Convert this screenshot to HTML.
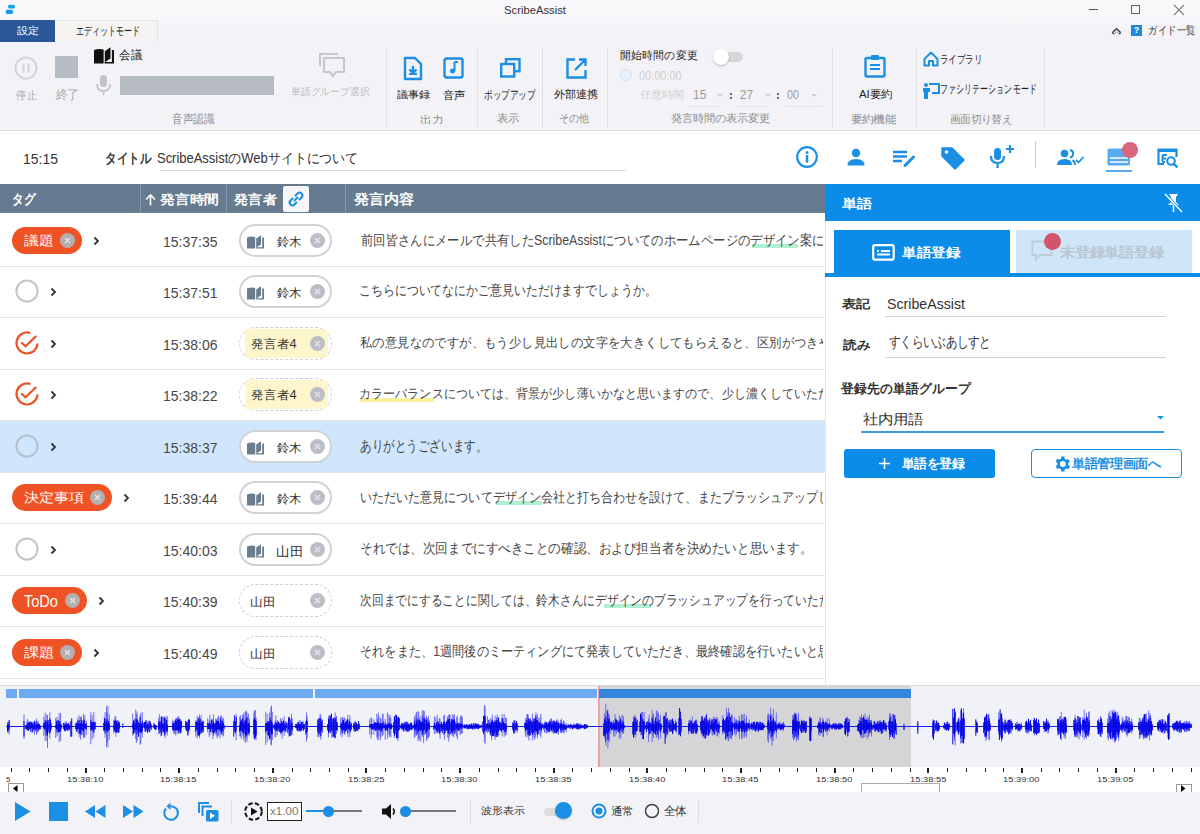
<!DOCTYPE html><html><head><meta charset="utf-8"><style>
*{box-sizing:border-box;margin:0;padding:0}
html,body{width:1200px;height:834px;overflow:hidden;background:#fff;font-family:"Liberation Sans",sans-serif;color:#333;position:relative}
.a{position:absolute;white-space:nowrap}
.t{position:absolute;white-space:nowrap;transform-origin:0 0}
svg{position:absolute;overflow:visible}
</style></head><body>
<div class="a" style="left:0px;top:0px;width:1200px;height:42px;background:linear-gradient(#f9f8fb 0px,#f9f8fb 14px,#f3f2f6 32px);"></div>
<svg style="left:5px;top:4px" width="11" height="11" viewBox="0 0 11 11"><rect x="3" y="0.8" width="7" height="3.6" rx="1.6" fill="#18a4ee"/><rect x="0.8" y="5.8" width="7.2" height="4.3" rx="1.6" fill="#1496e8"/><path d="M3.5 4.4L1.5 6M9 4.4L8 6" stroke="#7fd0f5" stroke-width="0.8"/></svg>
<div class="t" style="left:504.06px;top:3.33px;font-size:12px;line-height:16px;color:#333;font-weight:normal;transform:scale(0.9385,0.8889);--tw:61.97;--sy:0.8889;">ScribeAssist</div>
<div class="a" style="left:1089px;top:9px;width:9px;height:1px;background:#555;"></div>
<div class="a" style="left:1131px;top:5px;width:9px;height:9px;border:1px solid #666"></div>
<svg style="left:1174px;top:5px" width="10" height="10" viewBox="0 0 10 10"><path d="M0 0L10 10M10 0L0 10" stroke="#808080" stroke-width="1.1"/></svg>
<div class="a" style="left:0px;top:20px;width:55px;height:22px;background:#2b579a;"></div>
<div class="t" style="left:16.70px;top:24.33px;font-size:12px;line-height:16px;color:#fff;font-weight:normal;transform:scale(0.9261,0.8333);--tw:22.23;--sy:0.8333;">設定</div>
<div class="a" style="left:56px;top:20px;width:102px;height:22px;background:#f5f4f3;border-top:1px solid #e4e4e6;border-right:1px solid #e4e4e6"></div>
<div class="t" style="left:76.33px;top:23.00px;font-size:12px;line-height:16px;color:#222;font-weight:normal;transform:scale(0.6667,1.0000);--tw:64.00;--sy:1.0000;">エディットモード</div>
<svg style="left:1112px;top:27px" width="9" height="8" viewBox="0 0 9 8"><path d="M1.5 5.6L4.5 2.6L7.5 5.6" stroke="#505050" stroke-width="3.2" fill="none" stroke-linejoin="round" stroke-linecap="round"/><path d="M1.9 6.1L4.5 3.6L7.1 6.1" stroke="#f6f5f8" stroke-width="1.3" fill="none"/></svg>
<div class="a" style="left:1131px;top:25px;width:11px;height:11px;background:#1d8ae0;"></div>
<div class="a" style="left:1131px;top:25px;width:11px;height:11px;color:#fff;font-size:9px;line-height:11px;text-align:center;font-weight:bold">?</div>
<div class="t" style="left:1148.21px;top:23.15px;font-size:12px;line-height:16px;color:#333;font-weight:normal;transform:scale(0.7931,0.9500);--tw:47.59;--sy:0.9500;">ガイド一覧</div>
<div class="a" style="left:0px;top:42px;width:1200px;height:88px;background:#f3f2f6;"></div>
<div class="a" style="left:0px;top:130px;width:1200px;height:1px;background:#dedde2;"></div>
<svg style="left:14px;top:56px" width="24" height="24" viewBox="0 0 24 24"><circle cx="12" cy="12" r="10.5" fill="none" stroke="#d4d3d8" stroke-width="2"/><path d="M9.5 7.5v9M14.5 7.5v9" stroke="#d4d3d8" stroke-width="2"/></svg>
<div class="t" style="left:16.00px;top:87.59px;font-size:12px;line-height:16px;color:#a8a8ac;font-weight:normal;transform:scale(0.8750,0.9545);--tw:21.00;--sy:0.9545;">停止</div>
<div class="a" style="left:55px;top:56px;width:23px;height:22px;background:#b6bcc3;"></div>
<div class="t" style="left:56.00px;top:86.35px;font-size:12px;line-height:16px;color:#a8a8ac;font-weight:normal;transform:scale(0.9545,1.0500);--tw:22.91;--sy:1.0500;">終了</div>
<svg style="left:94px;top:47px" width="20" height="17" viewBox="0 0 17 14" preserveAspectRatio="none"><path d="M0 2.5Q4 1 8.2 2V13.5H0Z" fill="#111"/><path d="M9.2 12.5V3.5L14 0.3V9.5Z" fill="#111"/><path d="M15.2 2.5H17V13.5H9V12.3H15.2Z" fill="#111"/></svg>
<div class="t" style="left:119.02px;top:46.95px;font-size:12px;line-height:16px;color:#222;font-weight:normal;transform:scale(0.9783,1.0273);--tw:23.48;--sy:1.0273;">会議</div>
<svg style="left:96px;top:75px" width="15" height="21" viewBox="0 0 15 21"><rect x="4" y="0" width="7" height="12" rx="3.5" fill="#c4c4c8"/><path d="M1 9Q1 16 7.5 16Q14 16 14 9M7.5 16V20" stroke="#c4c4c8" stroke-width="1.8" fill="none"/></svg>
<div class="a" style="left:120px;top:76px;width:154px;height:18.5px;background:#b7bcc3;"></div>
<svg style="left:318px;top:52px" width="28" height="27" viewBox="0 0 28 27"><path d="M2 14V2H20" stroke="#c8c8cc" stroke-width="2.2" fill="none"/><path d="M6 6H26V20H18L15 24L12 20H6Z" stroke="#c8c8cc" stroke-width="2.2" fill="none" stroke-linejoin="round"/></svg>
<div class="t" style="left:291.18px;top:85.33px;font-size:12px;line-height:16px;color:#bbbbc0;font-weight:normal;transform:scale(0.8191,0.8333);--tw:78.64;--sy:0.8333;">単語グループ選択</div>
<div class="t" style="left:171.70px;top:111.00px;font-size:12px;line-height:16px;color:#8c8c8c;font-weight:normal;transform:scale(0.8813,1.0000);--tw:42.30;--sy:1.0000;">音声認識</div>
<div class="a" style="left:386px;top:48px;width:1px;height:80px;background:#e0dfe4;"></div>
<svg style="left:403px;top:56px" width="20" height="25" viewBox="0 0 20 25"><path d="M2 2H12L18 8V23H2Z" fill="none" stroke="#1a8fe3" stroke-width="2.4" stroke-linejoin="round"/><path d="M10 10V16M6.5 13.5L10 17L13.5 13.5" stroke="#1a8fe3" stroke-width="2.4" fill="none"/><rect x="6" y="17" width="8" height="2" fill="#1a8fe3"/></svg>
<svg style="left:443px;top:57px" width="21" height="22" viewBox="0 0 21 22"><rect x="1.5" y="1.5" width="18" height="19" rx="2" fill="none" stroke="#1a8fe3" stroke-width="2.4"/><path d="M11.5 5V14" stroke="#1a8fe3" stroke-width="2"/><path d="M11.5 5H15" stroke="#1a8fe3" stroke-width="2"/><circle cx="9.5" cy="14" r="2.5" fill="#1a8fe3"/></svg>
<div class="t" style="left:396.60px;top:88.33px;font-size:12px;line-height:16px;color:#222;font-weight:normal;transform:scale(0.9257,0.8333);--tw:33.33;--sy:0.8333;">議事録</div>
<div class="t" style="left:442.50px;top:88.18px;font-size:12px;line-height:16px;color:#222;font-weight:normal;transform:scale(0.9348,0.9091);--tw:22.43;--sy:0.9091;">音声</div>
<div class="t" style="left:419.81px;top:112.63px;font-size:12px;line-height:16px;color:#8c8c8c;font-weight:normal;transform:scale(0.9905,0.8364);--tw:23.77;--sy:0.8364;">出力</div>
<div class="a" style="left:477px;top:48px;width:1px;height:80px;background:#e0dfe4;"></div>
<svg style="left:500px;top:58px" width="21" height="20" viewBox="0 0 21 20"><rect x="6" y="1.2" width="13.5" height="12" fill="none" stroke="#1a8fe3" stroke-width="2.4"/><rect x="1.2" y="6" width="13" height="12.5" fill="#f3f2f6" stroke="#1a8fe3" stroke-width="2.4"/></svg>
<div class="t" style="left:483.98px;top:87.00px;font-size:12px;line-height:16px;color:#222;font-weight:normal;transform:scale(0.7186,1.0000);--tw:51.74;--sy:1.0000;">ポップアップ</div>
<div class="t" style="left:497.46px;top:111.27px;font-size:12px;line-height:16px;color:#8c8c8c;font-weight:normal;transform:scale(0.9391,0.9091);--tw:22.54;--sy:0.9091;">表示</div>
<div class="a" style="left:542px;top:48px;width:1px;height:80px;background:#e0dfe4;"></div>
<svg style="left:566px;top:58px" width="21" height="21" viewBox="0 0 21 21"><path d="M9 1.5H1.5V19.5H19.5V12" fill="none" stroke="#1a8fe3" stroke-width="2.4"/><path d="M13 1.5H19.5V8M19 2L9 12" fill="none" stroke="#1a8fe3" stroke-width="2.4"/></svg>
<div class="t" style="left:554.00px;top:87.17px;font-size:12px;line-height:16px;color:#222;font-weight:normal;transform:scale(0.9255,0.9167);--tw:44.43;--sy:0.9167;">外部連携</div>
<div class="t" style="left:559.17px;top:111.27px;font-size:12px;line-height:16px;color:#8c8c8c;font-weight:normal;transform:scale(0.8286,0.9091);--tw:29.83;--sy:0.9091;">その他</div>
<div class="a" style="left:607px;top:48px;width:1px;height:80px;background:#e0dfe4;"></div>
<div class="t" style="left:620.07px;top:47.88px;font-size:12px;line-height:16px;color:#222;font-weight:normal;transform:scale(0.9268,0.9375);--tw:77.85;--sy:0.9375;">開始時間の変更</div>
<div class="a" style="left:715px;top:52px;width:28px;height:10px;background:#d6d6da;border-radius:5px"></div>
<div class="a" style="left:713px;top:49px;width:16px;height:16px;border-radius:50%;background:#fff;box-shadow:0 1px 2px rgba(0,0,0,.25)"></div>
<div class="a" style="left:620px;top:69px;width:12px;height:12px;border-radius:50%;border:1.5px solid #cfe3f5;background:#e6f1fb"></div>
<div class="t" style="left:639.00px;top:67.07px;font-size:12px;line-height:16px;color:#cfcfd3;font-weight:normal;transform:scale(0.9130,1.0778);--tw:42.66;--sy:1.0778;">00:00:00</div>
<div class="t" style="left:640.00px;top:88.17px;font-size:12px;line-height:16px;color:#cfcfd3;font-weight:normal;transform:scale(0.9234,0.8167);--tw:44.32;--sy:0.8167;">任意時間</div>
<div class="t" style="left:693.00px;top:87.00px;font-size:12px;line-height:16px;color:#9a9a9e;font-weight:normal;transform:scale(1.0000,1.0000);--tw:13.36;--sy:1.0000;">15</div>
<div class="t" style="left:739.80px;top:87.00px;font-size:12px;line-height:16px;color:#9a9a9e;font-weight:normal;transform:scale(1.0000,1.0000);--tw:13.36;--sy:1.0000;">27</div>
<div class="t" style="left:787.40px;top:87.00px;font-size:12px;line-height:16px;color:#9a9a9e;font-weight:normal;transform:scale(0.8923,1.0000);--tw:11.92;--sy:1.0000;">00</div>
<div class="a" style="left:730px;top:93px;width:2px;height:2px;background:#666;"></div>
<div class="a" style="left:730px;top:97px;width:2px;height:2px;background:#666;"></div>
<div class="a" style="left:777px;top:93px;width:2px;height:2px;background:#666;"></div>
<div class="a" style="left:777px;top:97px;width:2px;height:2px;background:#666;"></div>
<svg style="left:717px;top:94px" width="6" height="4" viewBox="0 0 6 4"><path d="M0 0H6L3 3Z" fill="#d0d0d4"/></svg>
<svg style="left:765px;top:94px" width="6" height="4" viewBox="0 0 6 4"><path d="M0 0H6L3 3Z" fill="#d0d0d4"/></svg>
<svg style="left:811px;top:94px" width="6" height="4" viewBox="0 0 6 4"><path d="M0 0H6L3 3Z" fill="#d0d0d4"/></svg>
<div class="a" style="left:688px;top:106px;width:32px;height:1px;background:#e2e2e6;"></div>
<div class="a" style="left:736px;top:106px;width:32px;height:1px;background:#e2e2e6;"></div>
<div class="a" style="left:785px;top:106px;width:37px;height:1px;background:#e2e2e6;"></div>
<div class="t" style="left:670.58px;top:110.80px;font-size:12px;line-height:16px;color:#8c8c8c;font-weight:normal;transform:scale(0.9198,0.9000);--tw:99.34;--sy:0.9000;">発言時間の表示変更</div>
<div class="a" style="left:832px;top:48px;width:1px;height:80px;background:#e0dfe4;"></div>
<svg style="left:864px;top:54px" width="22" height="24" viewBox="0 0 22 24"><rect x="1.5" y="4" width="19" height="18.5" rx="1.5" fill="none" stroke="#1a8fe3" stroke-width="2.4"/><rect x="7" y="1" width="8" height="5" rx="1" fill="#1a8fe3"/><path d="M6 11H16M6 15H16" stroke="#1a8fe3" stroke-width="2"/></svg>
<div class="t" style="left:858.70px;top:86.67px;font-size:12px;line-height:16px;color:#222;font-weight:normal;transform:scale(0.9500,0.9091);--tw:33.58;--sy:0.9091;">AI要約</div>
<div class="t" style="left:851.06px;top:112.05px;font-size:12px;line-height:16px;color:#8c8c8c;font-weight:normal;transform:scale(0.9362,0.8750);--tw:44.94;--sy:0.8750;">要約機能</div>
<div class="a" style="left:916px;top:48px;width:1px;height:80px;background:#e0dfe4;"></div>
<svg style="left:923px;top:51px" width="16" height="16" viewBox="0 0 16 16"><path d="M1.5 8L8 1.5L14.5 8V14.5H10V10H6V14.5H1.5Z" fill="none" stroke="#1a8fe3" stroke-width="2" stroke-linejoin="round"/></svg>
<div class="t" style="left:939.60px;top:51.63px;font-size:12px;line-height:16px;color:#222;font-weight:normal;transform:scale(0.6982,0.8833);--tw:41.89;--sy:0.8833;">ライブラリ</div>
<svg style="left:923px;top:82px" width="17" height="17" viewBox="0 0 17 17"><path d="M6 2H16V11H9" fill="none" stroke="#1a8fe3" stroke-width="2"/><circle cx="3" cy="3" r="2" fill="#1a8fe3"/><path d="M0 6H7V10H5V17H1V10H0Z" fill="#1a8fe3"/></svg>
<div class="t" style="left:940.03px;top:81.35px;font-size:12px;line-height:16px;color:#222;font-weight:normal;transform:scale(0.6716,1.0182);--tw:96.71;--sy:1.0182;">ファシリテーションモード</div>
<div class="t" style="left:949.84px;top:112.05px;font-size:12px;line-height:16px;color:#8c8c8c;font-weight:normal;transform:scale(0.8614,0.8750);--tw:62.02;--sy:0.8750;">画面切り替え</div>
<div class="a" style="left:1044px;top:48px;width:1px;height:80px;background:#e0dfe4;"></div>
<div class="t" style="left:22.60px;top:148.60px;font-size:14px;line-height:18px;color:#333;font-weight:normal;transform:scale(1.0000,1.1000);--tw:35.05;--sy:1.1000;">15:15</div>
<div class="t" style="left:105.36px;top:149.00px;font-size:14px;line-height:18px;color:#3a3a3a;font-weight:bold;transform:scale(0.8222,1.0000);--tw:46.04;--sy:1.0000;">タイトル</div>
<div class="t" style="left:157.07px;top:149.00px;font-size:14px;line-height:18px;color:#333;font-weight:normal;transform:scale(0.9256,1.0000);--tw:201.37;--sy:1.0000;">ScribeAssistのWebサイトについて</div>
<div class="a" style="left:160px;top:170px;width:466px;height:1px;background:#d9d9dd;"></div>
<svg style="left:796px;top:146px" width="22" height="22" viewBox="0 0 22 22"><circle cx="11" cy="11" r="9.8" fill="none" stroke="#1a8fe3" stroke-width="2.2"/><circle cx="11" cy="6.5" r="1.5" fill="#1a8fe3"/><rect x="9.8" y="9" width="2.4" height="7.5" fill="#1a8fe3"/></svg>
<svg style="left:847px;top:148px" width="18" height="18" viewBox="0 0 18 18"><circle cx="9" cy="5" r="4.2" fill="#1a8fe3"/><path d="M0.5 17.5Q0.5 11 9 11Q17.5 11 17.5 17.5Z" fill="#1a8fe3"/></svg>
<svg style="left:893px;top:150px" width="23" height="17" viewBox="0 0 23 17"><path d="M0 2H14M0 6.5H14M0 11H9" stroke="#1a8fe3" stroke-width="2.4"/><path d="M12 15.5L20.5 7" stroke="#1a8fe3" stroke-width="3" stroke-linecap="round"/></svg>
<svg style="left:941px;top:147px" width="24" height="22" viewBox="0 0 24 22"><path d="M1 1H11L23 13L14 22L1 9Z" fill="#1a8fe3" stroke="#1a8fe3" stroke-width="1.5" stroke-linejoin="round"/><circle cx="5.5" cy="5" r="1.8" fill="#fff"/></svg>
<svg style="left:989px;top:145px" width="26" height="24" viewBox="0 0 26 24"><rect x="5" y="3" width="7" height="12" rx="3.5" fill="#1a8fe3"/><path d="M2 11Q2 18 8.5 18Q15 18 15 11M8.5 18V23" stroke="#1a8fe3" stroke-width="2.2" fill="none"/><path d="M21 0V8M17 4H25" stroke="#1a8fe3" stroke-width="2.2"/></svg>
<div class="a" style="left:1035px;top:141px;width:1px;height:27px;background:#cfc8cc;"></div>
<svg style="left:1057px;top:149px" width="27" height="17" viewBox="0 0 27 17"><circle cx="7.5" cy="4.5" r="3.8" fill="#1a8fe3"/><path d="M0 16Q0 10 7.5 10Q15 10 15 16Z" fill="#1a8fe3"/><path d="M13 1A3.8 3.8 0 0 1 13 8.5M15.5 11Q18 12.5 18 16" stroke="#1a8fe3" stroke-width="2" fill="none"/><path d="M19 11L21.5 13.5L26.5 8" stroke="#1a8fe3" stroke-width="1.8" fill="none"/></svg>
<svg style="left:1106px;top:148px" width="27" height="24" viewBox="0 0 27 24"><rect x="1.5" y="0.5" width="22.5" height="17" rx="1.5" fill="#5aaaf0"/><path d="M4 10H22M4 14H22" stroke="#fff" stroke-width="1.6"/><rect x="0" y="22" width="26" height="2" fill="#5aaaf0"/></svg>
<div class="a" style="left:1122px;top:142px;width:16px;height:16px;border-radius:50%;background:#d8677c"></div>
<svg style="left:1157px;top:148px" width="23" height="22" viewBox="0 0 23 22"><path d="M7 16H1.5V1.5H19.5V9" fill="none" stroke="#1a8fe3" stroke-width="2.2"/><rect x="1" y="1" width="19" height="3" fill="#1a8fe3"/><path d="M5.5 7H10M5.5 10.5H9M5.5 14H8M5.5 7V14" stroke="#1a8fe3" stroke-width="2" fill="none"/><circle cx="14" cy="13" r="3.8" fill="#fff" stroke="#1a8fe3" stroke-width="2"/><path d="M16.8 15.8L20.5 19.5" stroke="#1a8fe3" stroke-width="2.4"/></svg>
<div class="a" style="left:0px;top:184px;width:825px;height:29px;background:#667b8f;"></div>
<div class="t" style="left:11.94px;top:190.00px;font-size:14px;line-height:18px;color:#fff;font-weight:bold;transform:scale(0.8296,1.0000);--tw:23.23;--sy:1.0000;">タグ</div>
<div class="a" style="left:140px;top:184px;width:1px;height:29px;background:#859aab;"></div>
<svg style="left:145px;top:194px" width="11" height="12" viewBox="0 0 11 12"><path d="M5.5 11.5V1M1 5.5L5.5 1L10 5.5" stroke="#fff" stroke-width="1.6" fill="none"/></svg>
<div class="t" style="left:160.00px;top:191.14px;font-size:14px;line-height:18px;color:#fff;font-weight:bold;transform:scale(1.0545,0.9286);--tw:59.05;--sy:0.9286;">発言時間</div>
<div class="a" style="left:226px;top:184px;width:1px;height:29px;background:#859aab;"></div>
<div class="t" style="left:234.00px;top:190.80px;font-size:14px;line-height:18px;color:#fff;font-weight:bold;transform:scale(1.0310,0.9500);--tw:43.30;--sy:0.9500;">発言者</div>
<div class="a" style="left:283px;top:186px;width:26px;height:26px;background:#f6f5f8;border-radius:2px"></div>
<svg style="left:288px;top:191px" width="16" height="16" viewBox="0 0 16 16"><path d="M6.5 9.5L9.5 6.5" stroke="#1a8fe3" stroke-width="2" stroke-linecap="round"/><path d="M7.5 4.5L9.5 2.5A2.8 2.8 0 0 1 13.5 6.5L11.5 8.5M8.5 11.5L6.5 13.5A2.8 2.8 0 0 1 2.5 9.5L4.5 7.5" stroke="#1a8fe3" stroke-width="2" fill="none" stroke-linecap="round"/></svg>
<div class="a" style="left:345px;top:184px;width:1px;height:29px;background:#859aab;"></div>
<div class="t" style="left:353.75px;top:190.03px;font-size:14px;line-height:18px;color:#fff;font-weight:bold;transform:scale(1.0634,0.9857);--tw:59.55;--sy:0.9857;">発言内容</div>
<div class="a" style="left:12px;top:227.0px;width:70px;height:27.0px;background:#ef5224;border-radius:14px"></div>
<div class="t" style="left:23.80px;top:231.73px;font-size:14px;line-height:18px;color:#fff;font-weight:normal;transform:scale(1.0593,0.9231);--tw:29.66;--sy:0.9231;">議題</div>
<div class="a" style="left:60px;top:233.0px;width:15px;height:15px;border-radius:50%;background:#b3aeb0"></div>
<svg style="left:60px;top:233.0px" width="15" height="15" viewBox="0 0 15 15"><path d="M5 5L10 10M10 5L5 10" stroke="#e8e4e6" stroke-width="1.4"/></svg>
<svg style="left:93px;top:235.5px" width="7" height="10" viewBox="0 0 7 10"><path d="M1.5 1.5L5 5L1.5 8.5" stroke="#333" stroke-width="1.8" fill="none"/></svg>
<div class="t" style="left:163.00px;top:231.60px;font-size:14px;line-height:18px;color:#474747;font-weight:normal;transform:scale(1.0000,1.1000);--tw:54.50;--sy:1.1000;">15:37:35</div>
<div class="a" style="left:239px;top:224.0px;width:93px;height:33px;border-radius:17px;border:2.5px solid #d2d2d6;background:#fff;box-sizing:border-box"></div>
<svg style="left:247px;top:234.5px" width="17" height="14" viewBox="0 0 17 14"><path d="M0 2.5Q4 1 8.2 2V13.5H0Z" fill="#6a7d8e"/><path d="M9.2 12.5V3.5L14 0.3V9.5Z" fill="#6a7d8e"/><path d="M15.2 2.5H17V13.5H9V12.3H15.2Z" fill="#6a7d8e"/></svg>
<div class="t" style="left:277.30px;top:233.65px;font-size:13px;line-height:17px;color:#333;font-weight:normal;transform:scale(0.9600,0.9231);--tw:24.96;--sy:0.9231;">鈴木</div>
<div class="a" style="left:309.5px;top:233.0px;width:15px;height:15px;border-radius:50%;background:#bcbec6"></div>
<svg style="left:309.5px;top:233.0px" width="15" height="15" viewBox="0 0 15 15"><path d="M5 5L10 10M10 5L5 10" stroke="#e4e5ea" stroke-width="1.4"/></svg>
<div class="a" style="left:752px;top:244.0px;width:46px;height:4.0px;background:#aef0d0;"></div>
<div class="a" style="left:0;top:0;width:823px;height:834px;overflow:hidden">
<div class="t" style="left:360.50px;top:231.00px;font-size:14px;line-height:18px;color:#474747;font-weight:normal;transform:scale(0.8826,1.0000);--tw:463.41;--sy:1.0000;">前回皆さんにメールで共有したScribeAssistについてのホームページのデザイン案に</div>
</div>
<svg style="left:14.5px;top:279.0px" width="24" height="24" viewBox="0 0 24 24"><circle cx="12" cy="12" r="10.6" fill="none" stroke="#c4c4c6" stroke-width="2"/></svg>
<svg style="left:50px;top:286.5px" width="7" height="10" viewBox="0 0 7 10"><path d="M1.5 1.5L5 5L1.5 8.5" stroke="#333" stroke-width="1.8" fill="none"/></svg>
<div class="t" style="left:163.00px;top:282.60px;font-size:14px;line-height:18px;color:#474747;font-weight:normal;transform:scale(1.0000,1.1000);--tw:54.50;--sy:1.1000;">15:37:51</div>
<div class="a" style="left:239px;top:275.0px;width:93px;height:33px;border-radius:17px;border:2.5px solid #d2d2d6;background:#fff;box-sizing:border-box"></div>
<svg style="left:247px;top:285.5px" width="17" height="14" viewBox="0 0 17 14"><path d="M0 2.5Q4 1 8.2 2V13.5H0Z" fill="#6a7d8e"/><path d="M9.2 12.5V3.5L14 0.3V9.5Z" fill="#6a7d8e"/><path d="M15.2 2.5H17V13.5H9V12.3H15.2Z" fill="#6a7d8e"/></svg>
<div class="t" style="left:277.30px;top:284.65px;font-size:13px;line-height:17px;color:#333;font-weight:normal;transform:scale(0.9600,0.9231);--tw:24.96;--sy:0.9231;">鈴木</div>
<div class="a" style="left:309.5px;top:284.0px;width:15px;height:15px;border-radius:50%;background:#bcbec6"></div>
<svg style="left:309.5px;top:284.0px" width="15" height="15" viewBox="0 0 15 15"><path d="M5 5L10 10M10 5L5 10" stroke="#e4e5ea" stroke-width="1.4"/></svg>
<div class="a" style="left:0;top:0;width:823px;height:834px;overflow:hidden">
<div class="t" style="left:358.80px;top:281.00px;font-size:14px;line-height:18px;color:#474747;font-weight:normal;transform:scale(0.8506,1.0000);--tw:297.71;--sy:1.0000;">こちらについてなにかご意見いただけますでしょうか。</div>
</div>
<svg style="left:14.5px;top:331.0px" width="24" height="24" viewBox="0 0 24 24"><path d="M15.3 2A10.5 10.5 0 1 0 22.5 12.5" fill="none" stroke="#ea5227" stroke-width="2.2"/><path d="M6.2 11.3L10.5 15.2L21.2 5" stroke="#ea5227" stroke-width="2.2" fill="none"/></svg>
<svg style="left:50px;top:338.5px" width="7" height="10" viewBox="0 0 7 10"><path d="M1.5 1.5L5 5L1.5 8.5" stroke="#333" stroke-width="1.8" fill="none"/></svg>
<div class="t" style="left:163.00px;top:334.60px;font-size:14px;line-height:18px;color:#474747;font-weight:normal;transform:scale(1.0000,1.1000);--tw:54.50;--sy:1.1000;">15:38:06</div>
<div class="a" style="left:239px;top:327.0px;width:93px;height:33px;border-radius:17px;border:1.6px dashed #cfcfd4;background:#fff;box-sizing:border-box"></div>
<div class="a" style="left:245px;top:329.0px;width:83px;height:29.0px;background:#fdf6cc;border-radius:4px"></div>
<div class="t" style="left:250.70px;top:335.81px;font-size:13px;line-height:17px;color:#333;font-weight:normal;transform:scale(0.9891,0.9462);--tw:45.73;--sy:0.9462;">発言者4</div>
<div class="a" style="left:309.5px;top:336.0px;width:15px;height:15px;border-radius:50%;background:#bcbec6"></div>
<svg style="left:309.5px;top:336.0px" width="15" height="15" viewBox="0 0 15 15"><path d="M5 5L10 10M10 5L5 10" stroke="#e4e5ea" stroke-width="1.4"/></svg>
<div class="a" style="left:0;top:0;width:823px;height:834px;overflow:hidden">
<div class="t" style="left:359.61px;top:334.13px;font-size:14px;line-height:18px;color:#474747;font-weight:normal;transform:scale(0.8858,0.9333);--tw:471.27;--sy:0.9333;">私の意見なのですが、もう少し見出しの文字を大きくしてもらえると、区別がつきや</div>
</div>
<svg style="left:14.5px;top:382.0px" width="24" height="24" viewBox="0 0 24 24"><path d="M15.3 2A10.5 10.5 0 1 0 22.5 12.5" fill="none" stroke="#ea5227" stroke-width="2.2"/><path d="M6.2 11.3L10.5 15.2L21.2 5" stroke="#ea5227" stroke-width="2.2" fill="none"/></svg>
<svg style="left:50px;top:389.5px" width="7" height="10" viewBox="0 0 7 10"><path d="M1.5 1.5L5 5L1.5 8.5" stroke="#333" stroke-width="1.8" fill="none"/></svg>
<div class="t" style="left:163.00px;top:385.60px;font-size:14px;line-height:18px;color:#474747;font-weight:normal;transform:scale(1.0000,1.1000);--tw:54.50;--sy:1.1000;">15:38:22</div>
<div class="a" style="left:239px;top:378.0px;width:93px;height:33px;border-radius:17px;border:1.6px dashed #cfcfd4;background:#fff;box-sizing:border-box"></div>
<div class="a" style="left:245px;top:380.0px;width:83px;height:29.0px;background:#fdf6cc;border-radius:4px"></div>
<div class="t" style="left:250.70px;top:386.81px;font-size:13px;line-height:17px;color:#333;font-weight:normal;transform:scale(0.9891,0.9462);--tw:45.73;--sy:0.9462;">発言者4</div>
<div class="a" style="left:309.5px;top:387.0px;width:15px;height:15px;border-radius:50%;background:#bcbec6"></div>
<svg style="left:309.5px;top:387.0px" width="15" height="15" viewBox="0 0 15 15"><path d="M5 5L10 10M10 5L5 10" stroke="#e4e5ea" stroke-width="1.4"/></svg>
<div class="a" style="left:360px;top:398.0px;width:74px;height:4.0px;background:#f9f1a0;"></div>
<div class="a" style="left:0;top:0;width:823px;height:834px;overflow:hidden">
<div class="t" style="left:358.77px;top:385.13px;font-size:14px;line-height:18px;color:#474747;font-weight:normal;transform:scale(0.8631,0.9333);--tw:471.23;--sy:0.9333;">カラーバランスについては、背景が少し薄いかなと思いますので、少し濃くしていただ</div>
</div>
<div class="a" style="left:0px;top:421px;width:825px;height:51px;background:#d0e6fd;"></div>
<svg style="left:14.5px;top:434.0px" width="24" height="24" viewBox="0 0 24 24"><circle cx="12" cy="12" r="10.6" fill="none" stroke="#b5c0cb" stroke-width="2"/></svg>
<svg style="left:50px;top:441.5px" width="7" height="10" viewBox="0 0 7 10"><path d="M1.5 1.5L5 5L1.5 8.5" stroke="#333" stroke-width="1.8" fill="none"/></svg>
<div class="t" style="left:163.00px;top:437.60px;font-size:14px;line-height:18px;color:#474747;font-weight:normal;transform:scale(1.0000,1.1000);--tw:54.50;--sy:1.1000;">15:38:37</div>
<div class="a" style="left:239px;top:430.0px;width:93px;height:33px;border-radius:17px;border:2.5px solid #d2d2d6;background:#fff;box-sizing:border-box"></div>
<svg style="left:247px;top:440.5px" width="17" height="14" viewBox="0 0 17 14"><path d="M0 2.5Q4 1 8.2 2V13.5H0Z" fill="#6a7d8e"/><path d="M9.2 12.5V3.5L14 0.3V9.5Z" fill="#6a7d8e"/><path d="M15.2 2.5H17V13.5H9V12.3H15.2Z" fill="#6a7d8e"/></svg>
<div class="t" style="left:277.30px;top:439.65px;font-size:13px;line-height:17px;color:#333;font-weight:normal;transform:scale(0.9600,0.9231);--tw:24.96;--sy:0.9231;">鈴木</div>
<div class="a" style="left:309.5px;top:439.0px;width:15px;height:15px;border-radius:50%;background:#bcbec6"></div>
<svg style="left:309.5px;top:439.0px" width="15" height="15" viewBox="0 0 15 15"><path d="M5 5L10 10M10 5L5 10" stroke="#e4e5ea" stroke-width="1.4"/></svg>
<div class="a" style="left:0;top:0;width:823px;height:834px;overflow:hidden">
<div class="t" style="left:359.67px;top:435.77px;font-size:14px;line-height:18px;color:#474747;font-weight:normal;transform:scale(0.8269,1.0769);--tw:127.35;--sy:1.0769;">ありがとうございます。</div>
</div>
<div class="a" style="left:12px;top:484.0px;width:100px;height:27.0px;background:#ef5224;border-radius:14px"></div>
<div class="t" style="left:23.80px;top:488.73px;font-size:14px;line-height:18px;color:#fff;font-weight:normal;transform:scale(1.0764,0.9231);--tw:60.28;--sy:0.9231;">決定事項</div>
<div class="a" style="left:90px;top:490.0px;width:15px;height:15px;border-radius:50%;background:#b3aeb0"></div>
<svg style="left:90px;top:490.0px" width="15" height="15" viewBox="0 0 15 15"><path d="M5 5L10 10M10 5L5 10" stroke="#e8e4e6" stroke-width="1.4"/></svg>
<svg style="left:123px;top:492.5px" width="7" height="10" viewBox="0 0 7 10"><path d="M1.5 1.5L5 5L1.5 8.5" stroke="#333" stroke-width="1.8" fill="none"/></svg>
<div class="t" style="left:163.00px;top:488.60px;font-size:14px;line-height:18px;color:#474747;font-weight:normal;transform:scale(1.0000,1.1000);--tw:54.50;--sy:1.1000;">15:39:44</div>
<div class="a" style="left:239px;top:481.0px;width:93px;height:33px;border-radius:17px;border:2.5px solid #d2d2d6;background:#fff;box-sizing:border-box"></div>
<svg style="left:247px;top:491.5px" width="17" height="14" viewBox="0 0 17 14"><path d="M0 2.5Q4 1 8.2 2V13.5H0Z" fill="#6a7d8e"/><path d="M9.2 12.5V3.5L14 0.3V9.5Z" fill="#6a7d8e"/><path d="M15.2 2.5H17V13.5H9V12.3H15.2Z" fill="#6a7d8e"/></svg>
<div class="t" style="left:277.30px;top:490.65px;font-size:13px;line-height:17px;color:#333;font-weight:normal;transform:scale(0.9600,0.9231);--tw:24.96;--sy:0.9231;">鈴木</div>
<div class="a" style="left:309.5px;top:490.0px;width:15px;height:15px;border-radius:50%;background:#bcbec6"></div>
<svg style="left:309.5px;top:490.0px" width="15" height="15" viewBox="0 0 15 15"><path d="M5 5L10 10M10 5L5 10" stroke="#e4e5ea" stroke-width="1.4"/></svg>
<div class="a" style="left:496px;top:501.0px;width:46px;height:4.0px;background:#aef0d0;"></div>
<div class="a" style="left:0;top:0;width:823px;height:834px;overflow:hidden">
<div class="t" style="left:359.64px;top:488.00px;font-size:14px;line-height:18px;color:#474747;font-weight:normal;transform:scale(0.8610,1.0000);--tw:470.08;--sy:1.0000;">いただいた意見についてデザイン会社と打ち合わせを設けて、またブラッシュアップし</div>
</div>
<svg style="left:14.5px;top:537.0px" width="24" height="24" viewBox="0 0 24 24"><circle cx="12" cy="12" r="10.6" fill="none" stroke="#c4c4c6" stroke-width="2"/></svg>
<svg style="left:50px;top:544.5px" width="7" height="10" viewBox="0 0 7 10"><path d="M1.5 1.5L5 5L1.5 8.5" stroke="#333" stroke-width="1.8" fill="none"/></svg>
<div class="t" style="left:163.00px;top:540.60px;font-size:14px;line-height:18px;color:#474747;font-weight:normal;transform:scale(1.0000,1.1000);--tw:54.50;--sy:1.1000;">15:40:03</div>
<div class="a" style="left:239px;top:533.0px;width:93px;height:33px;border-radius:17px;border:2.5px solid #d2d2d6;background:#fff;box-sizing:border-box"></div>
<svg style="left:247px;top:543.5px" width="17" height="14" viewBox="0 0 17 14"><path d="M0 2.5Q4 1 8.2 2V13.5H0Z" fill="#6a7d8e"/><path d="M9.2 12.5V3.5L14 0.3V9.5Z" fill="#6a7d8e"/><path d="M15.2 2.5H17V13.5H9V12.3H15.2Z" fill="#6a7d8e"/></svg>
<div class="t" style="left:276.26px;top:542.50px;font-size:13px;line-height:17px;color:#333;font-weight:normal;transform:scale(1.0435,1.0000);--tw:27.13;--sy:1.0000;">山田</div>
<div class="a" style="left:309.5px;top:542.0px;width:15px;height:15px;border-radius:50%;background:#bcbec6"></div>
<svg style="left:309.5px;top:542.0px" width="15" height="15" viewBox="0 0 15 15"><path d="M5 5L10 10M10 5L5 10" stroke="#e4e5ea" stroke-width="1.4"/></svg>
<div class="a" style="left:0;top:0;width:823px;height:834px;overflow:hidden">
<div class="t" style="left:359.60px;top:539.00px;font-size:14px;line-height:18px;color:#474747;font-weight:normal;transform:scale(0.8976,1.0000);--tw:452.37;--sy:1.0000;">それでは、次回までにすべきことの確認、および担当者を決めたいと思います。</div>
</div>
<div class="a" style="left:12px;top:587.0px;width:75px;height:27.0px;background:#ef5224;border-radius:14px"></div>
<div class="t" style="left:23.80px;top:589.70px;font-size:14px;line-height:18px;color:#fff;font-weight:normal;transform:scale(1.0375,1.2000);--tw:33.91;--sy:1.2000;">ToDo</div>
<div class="a" style="left:65px;top:593.0px;width:15px;height:15px;border-radius:50%;background:#b3aeb0"></div>
<svg style="left:65px;top:593.0px" width="15" height="15" viewBox="0 0 15 15"><path d="M5 5L10 10M10 5L5 10" stroke="#e8e4e6" stroke-width="1.4"/></svg>
<svg style="left:98px;top:595.5px" width="7" height="10" viewBox="0 0 7 10"><path d="M1.5 1.5L5 5L1.5 8.5" stroke="#333" stroke-width="1.8" fill="none"/></svg>
<div class="t" style="left:163.00px;top:591.60px;font-size:14px;line-height:18px;color:#474747;font-weight:normal;transform:scale(1.0000,1.1000);--tw:54.50;--sy:1.1000;">15:40:39</div>
<div class="a" style="left:239px;top:584.0px;width:93px;height:33px;border-radius:17px;border:1.6px dashed #cfcfd4;background:#fff;box-sizing:border-box"></div>
<div class="t" style="left:250.19px;top:593.80px;font-size:13px;line-height:17px;color:#333;font-weight:normal;transform:scale(1.0087,0.9500);--tw:26.23;--sy:0.9500;">山田</div>
<div class="a" style="left:309.5px;top:593.0px;width:15px;height:15px;border-radius:50%;background:#bcbec6"></div>
<svg style="left:309.5px;top:593.0px" width="15" height="15" viewBox="0 0 15 15"><path d="M5 5L10 10M10 5L5 10" stroke="#e4e5ea" stroke-width="1.4"/></svg>
<div class="a" style="left:604px;top:604.0px;width:47px;height:4.0px;background:#aef0d0;"></div>
<div class="a" style="left:0;top:0;width:823px;height:834px;overflow:hidden">
<div class="t" style="left:359.66px;top:591.00px;font-size:14px;line-height:18px;color:#474747;font-weight:normal;transform:scale(0.8399,1.0000);--tw:470.34;--sy:1.0000;">次回までにすることに関しては、鈴木さんにデザインのブラッシュアップを行っていただ</div>
</div>
<div class="a" style="left:12px;top:639.0px;width:70px;height:27.0px;background:#ef5224;border-radius:14px"></div>
<div class="t" style="left:23.80px;top:643.73px;font-size:14px;line-height:18px;color:#fff;font-weight:normal;transform:scale(1.1037,0.9231);--tw:30.90;--sy:0.9231;">課題</div>
<div class="a" style="left:60px;top:645.0px;width:15px;height:15px;border-radius:50%;background:#b3aeb0"></div>
<svg style="left:60px;top:645.0px" width="15" height="15" viewBox="0 0 15 15"><path d="M5 5L10 10M10 5L5 10" stroke="#e8e4e6" stroke-width="1.4"/></svg>
<svg style="left:93px;top:647.5px" width="7" height="10" viewBox="0 0 7 10"><path d="M1.5 1.5L5 5L1.5 8.5" stroke="#333" stroke-width="1.8" fill="none"/></svg>
<div class="t" style="left:163.00px;top:643.60px;font-size:14px;line-height:18px;color:#474747;font-weight:normal;transform:scale(1.0000,1.1000);--tw:54.50;--sy:1.1000;">15:40:49</div>
<div class="a" style="left:239px;top:636.0px;width:93px;height:33px;border-radius:17px;border:1.6px dashed #cfcfd4;background:#fff;box-sizing:border-box"></div>
<div class="t" style="left:250.19px;top:645.80px;font-size:13px;line-height:17px;color:#333;font-weight:normal;transform:scale(1.0087,0.9500);--tw:26.23;--sy:0.9500;">山田</div>
<div class="a" style="left:309.5px;top:645.0px;width:15px;height:15px;border-radius:50%;background:#bcbec6"></div>
<svg style="left:309.5px;top:645.0px" width="15" height="15" viewBox="0 0 15 15"><path d="M5 5L10 10M10 5L5 10" stroke="#e4e5ea" stroke-width="1.4"/></svg>
<div class="a" style="left:0;top:0;width:823px;height:834px;overflow:hidden">
<div class="t" style="left:359.63px;top:642.00px;font-size:14px;line-height:18px;color:#474747;font-weight:normal;transform:scale(0.8711,1.0000);--tw:470.19;--sy:1.0000;">それをまた、1週間後のミーティングにて発表していただき、最終確認を行いたいと思</div>
</div>
<div class="a" style="left:0px;top:266px;width:825px;height:1px;background:#e4e4e8;"></div>
<div class="a" style="left:0px;top:317px;width:825px;height:1px;background:#e4e4e8;"></div>
<div class="a" style="left:0px;top:369px;width:825px;height:1px;background:#e4e4e8;"></div>
<div class="a" style="left:0px;top:420px;width:825px;height:1px;background:#e4e4e8;"></div>
<div class="a" style="left:0px;top:472px;width:825px;height:1px;background:#e4e4e8;"></div>
<div class="a" style="left:0px;top:523px;width:825px;height:1px;background:#e4e4e8;"></div>
<div class="a" style="left:0px;top:575px;width:825px;height:1px;background:#e4e4e8;"></div>
<div class="a" style="left:0px;top:626px;width:825px;height:1px;background:#e4e4e8;"></div>
<div class="a" style="left:0px;top:678px;width:825px;height:1px;background:#e4e4e8;"></div>
<div class="a" style="left:825px;top:184px;width:375px;height:501px;background:#fff;"></div>
<div class="a" style="left:825px;top:184px;width:1px;height:501px;background:#e6e6ea;"></div>
<div class="a" style="left:825px;top:184px;width:375px;height:37px;background:#0a8ce8;"></div>
<div class="t" style="left:842.30px;top:194.71px;font-size:14px;line-height:18px;color:#fff;font-weight:bold;transform:scale(1.0464,0.8929);--tw:29.30;--sy:0.8929;">単語</div>
<svg style="left:1164px;top:193px" width="19" height="20" viewBox="0 0 19 20"><path d="M5 1H14L12 4V9L15 12H4L7 9V4Z" fill="#fff"/><path d="M9.5 12V19" stroke="#fff" stroke-width="1.6"/><path d="M1 1L18 19" stroke="#0a8ce8" stroke-width="3"/><path d="M1 1L18 19" stroke="#fff" stroke-width="1.5"/></svg>
<div class="a" style="left:834px;top:230px;width:176px;height:43px;background:#0a8ce8;"></div>
<svg style="left:872px;top:244px" width="23" height="17" viewBox="0 0 23 17"><rect x="1.2" y="1.2" width="20.5" height="14.5" rx="2" fill="none" stroke="#fff" stroke-width="2.2"/><path d="M5 7H7M9 7H18M5 10.5H18" stroke="#fff" stroke-width="1.8"/></svg>
<div class="t" style="left:901.60px;top:244.14px;font-size:14px;line-height:18px;color:#fff;font-weight:bold;transform:scale(1.0429,0.9286);--tw:58.40;--sy:0.9286;">単語登録</div>
<div class="a" style="left:1016px;top:230px;width:176px;height:43px;background:#cfe5f8;"></div>
<svg style="left:1031px;top:240px" width="22" height="21" viewBox="0 0 22 21"><path d="M1.5 1.5H20.5V15H9L5 19.5V15H1.5Z" fill="none" stroke="#c2cad2" stroke-width="1.8"/></svg>
<div class="t" style="left:1059.80px;top:242.74px;font-size:14px;line-height:18px;color:#b9c5d1;font-weight:bold;transform:scale(1.0582,0.9786);--tw:103.70;--sy:0.9786;">未登録単語登録</div>
<div class="a" style="left:1044px;top:233px;width:17px;height:17px;border-radius:50%;background:#d2536b"></div>
<div class="a" style="left:825px;top:273px;width:375px;height:4px;background:#0a8ce8;"></div>
<div class="t" style="left:842.00px;top:295.76px;font-size:14px;line-height:18px;color:#333;font-weight:bold;transform:scale(1.0286,0.8714);--tw:28.80;--sy:0.8714;">表記</div>
<div class="t" style="left:886.99px;top:295.33px;font-size:14px;line-height:18px;color:#333;font-weight:normal;transform:scale(1.0132,0.9909);--tw:78.04;--sy:0.9909;">ScribeAssist</div>
<div class="a" style="left:885px;top:316px;width:281px;height:1px;background:#d4d4d8;"></div>
<div class="t" style="left:843.00px;top:336.63px;font-size:14px;line-height:18px;color:#333;font-weight:bold;transform:scale(0.9643,0.8357);--tw:27.00;--sy:0.8357;">読み</div>
<div class="t" style="left:889.00px;top:331.63px;font-size:14px;line-height:18px;color:#333;font-weight:normal;transform:scale(0.8073,1.0417);--tw:101.72;--sy:1.0417;">すくらいぶあしすと</div>
<div class="a" style="left:885px;top:357px;width:281px;height:1px;background:#d4d4d8;"></div>
<div class="t" style="left:840.80px;top:379.80px;font-size:14px;line-height:18px;color:#333;font-weight:bold;transform:scale(0.9284,0.9500);--tw:129.97;--sy:0.9500;">登録先の単語グループ</div>
<div class="t" style="left:862.70px;top:409.57px;font-size:14px;line-height:18px;color:#333;font-weight:normal;transform:scale(1.0782,0.9769);--tw:60.38;--sy:0.9769;">社内用語</div>
<svg style="left:1157px;top:416px" width="7" height="4" viewBox="0 0 7 4"><path d="M0 0H7L3.5 3.5Z" fill="#1a8fe3"/></svg>
<div class="a" style="left:861px;top:431px;width:303px;height:1.5px;background:#3b9be6;"></div>
<div class="a" style="left:844px;top:449px;width:151px;height:29px;background:#0a8ce8;border-radius:3px"></div>
<svg style="left:878.5px;top:458px" width="11" height="11" viewBox="0 0 11 11"><path d="M5.5 0V11M0 5.5H11" stroke="#fff" stroke-width="1.6"/></svg>
<div class="t" style="left:901.70px;top:455.58px;font-size:13px;line-height:17px;color:#fff;font-weight:bold;transform:scale(0.9585,0.9615);--tw:62.30;--sy:0.9615;">単語を登録</div>
<div class="a" style="left:1031px;top:449px;width:151px;height:29px;border-radius:4px;border:1px solid #1a8fe3;background:#fff"></div>
<svg style="left:1052px;top:454px" width="20" height="20" viewBox="0 0 24 24"><path fill="#1a8fe3" d="M19.4 13a7.5 7.5 0 0 0 0-2l2.1-1.6-2-3.5-2.5 1a7.6 7.6 0 0 0-1.7-1L15 3h-4l-.4 2.6a7.6 7.6 0 0 0-1.7 1l-2.5-1-2 3.5L6.5 11a7.5 7.5 0 0 0 0 2l-2.1 1.6 2 3.5 2.5-1a7.6 7.6 0 0 0 1.7 1L11 21h4l.4-2.6a7.6 7.6 0 0 0 1.7-1l2.5 1 2-3.5zM13 15.5a3.5 3.5 0 1 1 0-7 3.5 3.5 0 0 1 0 7z"/></svg>
<div class="t" style="left:1071.70px;top:455.58px;font-size:13px;line-height:17px;color:#1a8fe3;font-weight:bold;transform:scale(0.9747,0.9615);--tw:88.70;--sy:0.9615;">単語管理画面へ</div>
<div class="a" style="left:0px;top:679px;width:825px;height:6px;background:#fff;"></div>
<div class="a" style="left:825px;top:679px;width:1px;height:6px;background:#e6e6ea;"></div>
<div class="a" style="left:0px;top:685px;width:1200px;height:1px;background:#d9d9de;"></div>
<div class="a" style="left:0px;top:686px;width:1200px;height:81px;background:#f1f1f8;"></div>
<div class="a" style="left:598px;top:686px;width:313px;height:81px;background:#d5d5d8;"></div>
<div class="a" style="left:598px;top:686px;width:1.5px;height:81px;background:#f0a0a0;"></div>
<div class="a" style="left:6px;top:689px;width:11px;height:9px;background:#6cabf1;"></div>
<div class="a" style="left:19px;top:689px;width:294px;height:9px;background:#6cabf1;"></div>
<div class="a" style="left:315px;top:689px;width:282px;height:9px;background:#6cabf1;"></div>
<div class="a" style="left:599px;top:689px;width:312px;height:9px;background:#3384dc;"></div>
<svg style="left:0;top:0" width="1200" height="834" viewBox="0 0 1200 834"><path d="M6 726.5H1192" stroke="#1a1ae8" stroke-width="1.1"/><path d="M7.5 722.1V732.7M8.3 721.7V732.8M9.2 719.8V734.6M23.0 726.5V726.5M24.0 714.3V739.1M25.0 726.5V726.5M25.0 726.5V726.5M27.2 719.0V730.7M27.9 720.6V730.6M33.7 721.6V731.2M34.5 720.4V734.7M36.6 718.6V734.7M37.4 721.5V732.6M38.1 720.9V731.9M41.0 726.5V726.5M43.0 726.5V726.5M43.8 716.5V736.1M45.2 712.6V740.6M46.8 714.4V741.2M47.5 715.2V748.0M49.8 712.4V738.6M55.0 726.5V726.5M55.7 718.0V737.9M57.1 716.8V736.3M59.2 712.9V742.1M60.6 713.0V741.3M62.0 726.5V726.5M63.7 723.0V729.0M65.1 721.5V731.3M65.8 723.1V730.8M66.5 721.2V730.2M68.6 722.9V729.5M69.3 723.2V730.4M70.0 726.5V726.5M77.8 717.6V733.1M79.2 715.4V737.2M80.6 716.7V739.6M81.4 716.5V735.3M82.8 719.9V735.1M83.5 713.9V737.8M84.2 720.1V737.5M84.9 715.2V737.2M86.3 721.3V734.8M90.0 726.5V726.5M90.8 712.1V744.4M92.2 715.1V739.5M93.8 711.9V737.5M105.1 712.2V737.7M106.5 706.2V747.1M107.2 712.4V742.4M107.9 705.7V747.4M109.3 714.1V739.7M113.0 726.5V726.5M113.7 719.4V733.3M115.1 716.0V732.6M115.8 716.5V736.8M119.3 721.4V732.6M132.7 713.5V735.6M135.7 709.7V739.1M136.4 714.0V742.9M137.1 711.5V741.0M140.1 715.1V744.8M140.8 712.8V744.1M142.3 712.2V737.7M143.0 726.5V726.5M145.2 721.5V731.5M146.0 721.1V731.3M147.5 721.6V732.3M153.0 726.5V726.5M154.6 724.0V729.0M157.0 726.5V726.5M158.0 726.5V726.5M158.7 718.1V734.1M159.4 714.3V733.5M160.9 716.9V736.4M165.1 716.1V738.0M167.3 715.9V735.5M168.0 726.5V726.5M172.7 719.7V730.8M175.6 718.4V735.5M177.0 719.1V734.3M178.4 715.9V733.6M179.1 717.2V733.3M179.9 720.3V733.7M180.6 719.9V732.3M181.3 722.0V732.4M185.0 726.5V726.5M186.4 721.6V730.7M187.9 720.6V734.5M188.6 720.3V732.3M189.3 719.3V730.4M195.0 726.5V726.5M195.8 719.9V736.7M197.2 715.6V738.4M198.0 718.6V736.0M198.8 718.3V735.9M199.5 714.6V738.0M201.0 715.0V733.4M201.8 719.9V732.9M203.2 720.9V732.2M204.0 726.5V726.5M207.7 718.1V732.4M209.2 720.1V736.9M209.9 714.9V735.3M212.8 718.9V739.1M213.5 714.4V735.9M215.6 718.6V734.8M216.4 719.8V735.3M217.1 718.6V738.3M217.8 717.4V736.6M218.5 715.5V735.6M220.0 717.6V738.3M220.7 715.8V733.9M221.4 715.6V735.0M222.1 720.6V735.5M222.8 717.5V734.1M223.6 718.6V736.5M225.0 726.5V726.5M236.2 713.9V740.2M237.0 726.5V726.5M239.7 716.5V736.2M240.5 715.3V736.5M241.2 718.8V738.7M242.7 714.6V735.4M243.4 714.7V738.8M244.1 712.2V741.2M245.6 711.3V742.8M246.3 710.6V738.5M247.1 712.5V741.6M248.5 713.7V734.6M249.3 718.6V735.9M250.0 726.5V726.5M253.0 726.5V726.5M253.8 712.4V738.2M254.6 710.2V739.8M255.4 710.2V739.4M256.2 717.7V739.6M257.0 726.5V726.5M265.0 726.5V726.5M265.7 711.8V744.9M267.2 713.8V742.1M269.4 712.6V739.7M270.8 707.5V744.5M271.5 705.5V745.3M272.3 711.7V740.1M275.1 720.5V737.4M275.8 715.4V737.0M277.2 719.9V735.0M280.7 718.2V734.6M282.1 718.5V738.8M284.2 716.1V735.9M285.6 721.0V732.4M286.3 721.6V731.5M289.2 717.3V734.9M291.5 713.8V735.2M292.2 718.3V734.8M293.0 726.5V726.5M295.0 726.5V726.5M297.1 723.5V730.2M297.9 721.8V731.2M299.3 720.1V730.7M300.7 720.6V732.1M301.4 722.0V731.0M302.9 720.7V731.1M303.6 722.3V730.9M305.0 726.5V726.5M305.0 726.5V726.5M306.5 712.4V741.7M307.2 716.2V738.3M308.0 726.5V726.5M317.0 726.5V726.5M317.8 718.7V737.2M318.5 719.0V736.6M320.0 714.2V737.3M320.8 714.5V739.8M328.5 715.8V737.4M335.1 712.4V738.1M336.5 716.0V734.1M338.0 726.5V726.5M340.7 717.8V735.4M342.1 716.8V737.2M342.8 717.0V733.4M344.2 717.3V734.2M344.9 718.3V735.0M347.8 714.6V737.1M349.2 719.5V734.1M349.9 715.3V737.1M352.0 726.5V726.5M353.7 723.4V730.5M354.4 722.0V731.0M355.1 720.6V731.2M369.0 726.5V726.5M369.7 719.3V734.4M371.1 717.3V738.6M371.8 718.0V734.9M373.9 719.4V734.9M376.8 714.0V737.4M377.5 718.7V739.9M378.2 712.6V740.1M378.9 715.6V736.6M380.3 717.9V740.4M381.0 718.7V737.2M382.4 713.9V735.8M383.1 713.6V735.1M385.2 718.6V739.8M387.4 712.4V738.8M388.8 714.6V734.5M389.5 717.4V737.0M390.2 714.9V735.3M390.9 718.0V737.5M393.0 726.5V726.5M393.0 726.5V726.5M394.4 717.5V737.9M397.9 716.1V741.3M400.0 726.5V726.5M400.0 726.5V726.5M402.2 723.6V730.6M402.9 722.6V729.4M403.6 723.6V730.8M405.1 723.7V731.9M406.5 721.1V731.4M407.2 723.7V729.8M407.9 722.3V731.6M409.4 723.6V731.6M410.8 723.0V729.3M411.6 724.1V729.4M414.4 716.1V737.9M415.1 718.7V736.8M415.8 714.2V733.9M416.5 711.9V735.7M418.0 711.2V741.1M418.7 711.8V738.4M419.4 717.9V740.4M420.8 716.0V741.7M422.2 710.2V735.2M422.9 714.4V737.0M423.6 710.3V742.8M424.3 711.2V735.0M425.8 717.6V734.3M426.5 715.6V741.0M427.2 717.9V739.4M427.9 718.9V737.7M428.6 716.0V737.6M429.3 720.3V736.5M430.0 726.5V726.5M434.4 716.4V734.0M435.9 717.1V733.5M437.3 714.8V733.6M439.4 718.1V734.3M440.1 718.6V738.7M443.7 715.9V735.1M444.4 714.5V739.8M447.3 716.2V737.5M448.7 714.8V741.6M449.4 714.0V737.0M450.1 715.0V734.3M452.3 714.1V736.1M453.7 715.2V737.2M454.4 714.3V734.8M456.6 717.3V736.5M457.3 715.7V739.3M460.1 717.1V735.1M460.9 715.5V733.8M461.6 715.5V733.6M462.3 717.3V733.5M463.0 726.5V726.5M463.7 724.6V728.3M470.0 724.2V729.0M471.4 724.6V728.6M472.9 723.5V729.5M473.6 723.4V728.2M476.4 724.0V728.6M477.8 724.1V728.9M481.3 724.4V728.4M482.0 726.5V726.5M484.4 705.1V742.2M485.2 706.2V744.0M487.4 716.2V733.0M490.2 718.3V735.4M491.6 718.8V740.3M492.3 714.5V735.8M495.1 715.8V739.7M496.5 717.5V737.0M497.2 714.5V735.1M497.9 718.3V735.1M498.6 717.4V736.3M502.1 714.1V736.4M504.2 714.0V736.9M505.6 717.6V735.5M506.3 717.9V734.6M507.0 726.5V726.5M512.0 726.5V726.5M512.8 722.2V730.5M513.5 721.4V733.4M515.0 720.0V732.9M517.2 722.9V732.7M518.0 726.5V726.5M524.0 726.5V726.5M525.4 718.0V736.5M526.8 714.1V737.3M527.5 714.1V734.9M528.2 714.4V736.4M528.9 718.6V740.7M532.4 713.4V740.4M533.9 718.3V737.0M534.6 717.8V739.6M535.3 714.9V737.5M536.0 712.2V735.2M537.4 714.2V738.3M538.8 717.9V734.1M540.2 716.7V735.6M540.9 713.8V737.7M544.4 723.1V732.3M545.1 720.8V733.0M546.5 722.0V733.5M547.9 722.3V732.8M550.1 719.8V731.1M550.8 718.1V731.2M551.5 719.1V730.8M553.6 720.2V733.8M554.3 720.8V732.8M555.0 721.7V732.3M557.1 719.2V733.5M558.5 720.7V734.6M560.6 720.1V733.0M561.4 718.7V732.9M562.1 722.1V732.7M563.5 720.7V732.6M564.2 721.2V733.4M566.3 723.1V732.2M567.0 726.5V726.5M567.0 726.5V726.5M567.7 724.4V728.3M570.5 724.0V729.3M573.3 723.6V729.0M574.0 723.6V728.4M576.8 724.6V729.0M577.5 724.5V729.5M578.9 723.4V729.1M579.6 723.4V729.1M580.3 724.1V729.1M581.0 724.0V728.6M584.5 724.2V729.1M585.9 724.1V729.0M586.6 724.3V728.7M587.3 724.8V728.1M588.0 726.5V726.5M603.0 726.5V726.5M604.4 713.6V738.3M605.8 703.5V745.5M607.9 709.2V748.6M608.6 713.7V740.5M609.3 714.7V742.3M610.0 726.5V726.5M610.7 720.9V733.8M613.6 720.0V736.5M615.0 714.1V736.6M616.4 718.9V734.0M619.3 715.3V738.0M620.7 716.9V738.8M622.1 714.6V733.8M622.9 720.0V732.5M623.6 716.2V733.8M625.0 726.5V726.5M633.5 716.6V732.6M635.0 714.9V738.3M635.8 719.0V735.1M638.0 726.5V726.5M644.2 711.8V734.0M648.5 718.8V741.6M649.2 715.0V735.3M652.1 710.4V741.9M652.8 716.1V735.3M653.5 713.7V737.7M656.3 710.6V737.7M657.0 710.7V734.5M657.8 714.0V737.2M658.5 712.6V740.0M660.6 715.1V738.6M663.0 726.5V726.5M668.0 726.5V726.5M668.8 720.1V732.8M669.5 722.2V731.8M672.5 719.1V732.5M673.2 720.6V732.5M675.5 719.4V730.8M676.2 721.6V732.7M677.0 726.5V726.5M678.0 726.5V726.5M688.0 726.5V726.5M688.7 720.3V734.5M692.3 716.5V732.5M695.9 719.7V734.2M696.6 720.5V732.7M698.0 726.5V726.5M700.0 726.5V726.5M701.4 716.2V733.3M702.1 718.5V735.8M702.9 718.4V737.9M705.0 717.0V737.3M705.7 716.0V734.3M708.6 720.2V732.7M709.3 718.1V732.9M710.0 726.5V726.5M710.0 726.5V726.5M710.7 718.4V732.1M712.1 719.5V734.8M712.9 718.8V735.6M713.6 716.6V732.6M715.0 716.9V734.7M717.1 716.5V736.2M717.9 718.4V736.5M719.3 721.2V733.9M720.0 726.5V726.5M722.7 715.1V734.8M726.4 708.1V737.5M727.1 712.0V738.0M727.9 714.7V740.4M728.6 708.1V741.2M731.5 714.7V739.3M732.3 714.6V735.8M734.4 717.1V734.1M735.8 719.2V736.6M736.5 719.6V733.8M739.4 715.9V738.5M741.5 714.4V739.3M742.9 714.5V738.2M744.3 713.8V738.0M745.0 718.9V735.7M746.5 715.7V737.4M749.3 719.6V731.2M750.0 726.5V726.5M750.0 726.5V726.5M750.7 723.1V729.3M751.4 722.8V728.8M752.1 721.8V729.7M755.0 722.4V729.2M756.4 723.5V730.8M757.1 721.2V731.7M758.6 722.0V731.0M760.0 721.2V729.3M762.1 723.2V729.3M762.9 722.7V730.2M765.0 726.5V726.5M767.0 726.5V726.5M767.7 714.5V740.4M768.4 713.5V742.6M769.1 714.5V736.1M770.6 707.6V738.1M771.3 714.1V740.2M772.0 714.6V745.4M773.4 709.4V740.8M776.3 712.6V738.4M777.0 726.5V726.5M777.7 723.6V730.1M779.9 721.6V730.2M782.1 722.7V730.6M783.5 721.9V730.9M792.7 715.2V737.8M793.5 714.6V740.0M794.2 717.9V739.7M794.9 712.7V735.2M795.6 713.1V735.9M796.4 713.7V741.4M797.1 716.6V739.7M798.5 712.9V739.9M800.0 726.5V726.5M800.0 726.5V726.5M801.4 719.5V730.3M803.5 721.6V731.1M804.2 721.9V733.0M807.0 726.5V726.5M809.0 726.5V726.5M809.8 718.4V735.6M811.2 717.5V740.3M818.4 721.8V735.2M819.9 717.3V735.9M820.6 718.2V733.7M822.8 717.6V736.8M823.5 719.7V737.0M827.1 718.0V735.2M829.3 718.5V731.5M830.0 726.5V726.5M830.7 725.0V728.8M832.2 724.8V728.0M834.3 723.6V729.5M837.9 723.7V728.2M839.4 724.2V728.2M840.1 724.8V729.1M840.8 724.5V728.4M842.3 725.2V727.9M847.8 718.2V732.6M848.5 721.4V733.2M857.0 726.5V726.5M859.9 716.9V734.6M860.6 717.1V736.6M861.4 714.5V737.1M862.1 718.3V738.7M863.5 715.4V737.6M864.3 718.2V733.3M865.0 713.5V737.3M866.5 719.5V733.1M867.2 716.8V739.3M868.6 717.6V737.1M869.4 714.7V734.7M871.5 720.2V736.6M873.0 726.5V726.5M873.7 721.3V729.6M875.1 721.9V731.6M877.2 721.4V731.6M879.3 722.2V732.1M880.0 720.8V731.0M880.7 722.4V731.7M884.2 720.0V730.8M885.6 721.9V730.6M886.3 723.4V732.0M887.0 726.5V726.5M889.5 714.2V739.8M890.2 712.7V735.1M891.8 715.5V735.2M894.0 715.4V737.9M897.0 726.5V726.5M903.0 726.5V726.5M904.0 723.3V729.9M905.0 726.5V726.5M917.8 722.4V730.4M918.5 726.5V726.5M932.0 726.5V726.5M932.8 719.1V735.8M936.4 721.5V730.6M937.1 723.1V730.2M937.9 721.7V730.9M940.0 726.5V726.5M945.8 723.0V729.3M946.5 723.5V730.9M947.2 721.9V730.4M947.9 722.1V729.6M950.0 726.5V726.5M954.4 714.4V740.6M955.2 712.6V745.4M956.0 726.5V726.5M957.6 720.8V731.9M958.4 717.7V735.0M959.2 717.8V733.5M960.0 726.5V726.5M960.7 710.3V743.6M961.4 709.0V743.0M962.9 712.7V742.1M963.6 708.3V739.4M965.0 726.5V726.5M975.0 726.5V726.5M977.2 722.2V732.8M983.0 726.5V726.5M984.5 716.9V736.8M985.2 716.8V737.3M985.9 715.5V741.1M986.6 715.3V739.1M988.8 713.7V739.5M989.5 718.9V740.1M991.0 726.5V726.5M998.0 726.5V726.5M998.7 712.4V734.5M1001.6 717.1V742.0M1002.3 717.6V735.4M1003.0 726.5V726.5M1003.0 726.5V726.5M1005.1 719.0V733.9M1005.9 720.8V732.3M1009.4 719.3V732.5M1010.9 719.0V734.0M1015.7 723.5V729.3M1016.4 722.0V729.6M1017.8 721.6V731.8M1021.3 722.3V730.2M1022.0 726.5V726.5M1025.0 726.5V726.5M1025.7 721.7V732.2M1026.4 720.4V732.8M1028.5 721.4V733.2M1032.0 726.5V726.5M1034.4 718.3V735.5M1035.1 719.7V734.0M1035.8 721.0V733.8M1036.5 719.6V734.8M1040.0 726.5V726.5M1043.0 726.5V726.5M1044.4 721.6V732.2M1045.1 722.5V730.9M1045.8 720.9V732.0M1047.9 720.2V733.8M1048.6 721.8V732.4M1057.7 718.8V735.7M1061.3 712.0V740.3M1064.1 716.3V738.4M1064.9 716.7V736.2M1065.6 717.6V738.6M1066.3 719.4V732.8M1067.0 726.5V726.5M1074.5 719.5V736.7M1075.2 714.9V737.4M1076.0 719.7V733.7M1077.5 715.9V737.5M1079.0 718.6V739.2M1079.8 719.2V733.7M1080.5 717.6V736.3M1082.0 726.5V726.5M1082.7 717.2V737.5M1084.2 709.6V739.8M1086.4 712.9V739.0M1088.5 712.2V736.8M1089.3 711.2V735.1M1090.0 726.5V726.5M1097.0 726.5V726.5M1097.8 721.8V734.3M1098.5 718.4V734.2M1100.0 719.7V736.0M1100.8 718.8V735.3M1103.0 726.5V726.5M1107.7 718.4V738.3M1108.4 713.0V740.3M1109.9 710.8V736.2M1110.6 716.5V739.1M1112.1 709.9V737.1M1114.2 709.7V742.3M1114.9 713.8V742.4M1115.7 712.1V739.8M1116.4 714.2V739.0M1117.8 711.8V737.2M1118.6 715.0V740.8M1119.3 719.8V734.3M1122.2 716.9V732.6M1122.9 718.6V732.6M1125.8 715.7V733.7M1126.5 716.0V735.2M1127.2 720.0V736.6M1127.9 716.3V734.7M1128.7 717.4V732.2M1129.4 717.3V733.2M1131.6 718.6V733.6M1132.3 721.9V731.2M1139.4 717.7V739.0M1140.1 718.2V737.7M1143.0 717.2V737.9M1143.7 715.1V739.6M1144.4 715.1V738.1M1145.1 716.2V735.7M1146.6 713.3V738.2M1148.7 710.5V735.0M1149.4 717.6V740.4M1150.1 713.2V736.2M1150.9 717.7V734.6M1157.7 722.1V729.8M1159.9 722.6V732.3M1161.3 718.9V732.0M1162.7 719.3V733.1M1164.1 719.6V733.9M1167.8 714.8V738.2M1168.5 713.9V737.0M1172.0 726.5V726.5M1173.4 723.2V729.9M1174.1 723.1V731.4M1175.6 722.5V729.6M1177.0 722.3V729.9M1179.9 722.2V732.9M1180.6 720.2V732.6M1184.1 722.0V729.8M1184.9 721.1V731.8M1186.3 720.6V732.5M1187.7 721.5V731.4M1188.4 722.6V730.7M1189.1 720.8V730.0M1192.0 726.5V726.5" stroke="#3a3af0" stroke-width="1" stroke-opacity="0.7"/><path d="M6.7 726.5V726.5M7.5 724.2V730.9M8.3 724.0V730.8M9.2 720.4V729.0M10.0 726.5V726.5M23.0 726.5V726.5M24.0 721.0V736.7M25.0 726.5V726.5M25.0 726.5V726.5M25.7 725.1V729.0M26.5 724.9V729.0M27.2 722.5V729.9M27.9 723.9V730.4M28.6 722.8V730.7M29.4 721.6V729.0M30.1 722.7V730.2M30.8 721.5V732.1M31.5 722.2V728.4M32.3 722.3V732.5M33.0 723.8V729.6M33.7 724.7V729.9M34.5 721.7V728.6M35.2 724.6V729.7M35.9 721.4V731.3M36.6 724.1V729.4M37.4 724.6V728.5M38.1 723.3V728.6M38.8 723.7V730.8M39.5 724.2V729.1M40.3 725.5V729.3M41.0 726.5V726.5M43.0 726.5V726.5M43.8 723.3V728.6M44.5 722.4V729.1M45.2 720.1V729.9M46.0 722.9V735.4M46.8 720.5V732.6M47.5 721.9V735.7M48.2 720.0V730.3M49.0 723.4V732.7M49.8 718.1V733.6M50.5 719.7V731.7M51.2 723.4V729.2M52.0 726.5V726.5M55.0 726.5V726.5M55.7 725.1V727.9M56.4 721.1V729.6M57.1 720.3V732.5M57.8 723.9V729.1M58.5 720.4V732.3M59.2 721.8V732.0M59.9 721.4V731.4M60.6 724.4V731.1M61.3 724.2V728.8M62.0 726.5V726.5M63.0 726.5V726.5M63.7 723.0V729.0M64.4 725.1V730.9M65.1 723.5V731.2M65.8 724.4V728.7M66.5 724.2V729.3M67.2 723.6V729.9M67.9 723.9V731.1M68.6 723.8V729.2M69.3 725.4V729.4M70.0 726.5V726.5M70.0 726.5V726.5M70.8 721.0V736.8M71.7 718.4V736.6M72.5 726.5V726.5M75.0 726.5V726.5M75.7 723.8V729.0M76.4 722.3V731.5M77.1 723.8V730.6M77.8 720.4V729.0M78.5 723.4V728.9M79.2 720.2V733.6M79.9 723.7V733.7M80.6 723.3V734.2M81.4 719.6V729.5M82.1 723.4V730.2M82.8 724.1V731.4M83.5 721.4V730.9M84.2 719.6V728.9M84.9 723.7V728.8M85.6 724.1V728.5M86.3 723.6V729.8M87.0 726.5V726.5M90.0 726.5V726.5M90.8 719.7V730.7M91.5 722.4V729.8M92.2 722.2V730.1M93.0 721.6V731.4M93.8 721.9V732.6M94.5 722.5V729.4M95.2 721.7V729.4M96.0 726.5V726.5M103.0 726.5V726.5M103.7 722.9V730.7M104.4 717.7V730.8M105.1 719.0V733.4M105.8 722.8V729.9M106.5 722.0V730.5M107.2 718.9V731.1M107.9 722.9V732.0M108.6 720.9V730.2M109.3 723.3V730.0M110.0 726.5V726.5M113.0 726.5V726.5M113.7 724.9V728.9M114.4 721.2V731.2M115.1 719.8V730.3M115.8 720.5V732.0M116.5 721.0V732.7M117.2 723.7V731.3M117.9 720.1V732.7M118.6 722.1V732.6M119.3 722.6V728.7M120.0 726.5V726.5M122.0 726.5V726.5M122.8 723.4V728.1M123.5 726.5V726.5M132.0 726.5V726.5M132.7 723.9V728.5M133.5 720.4V734.2M134.2 722.0V731.6M134.9 718.8V733.1M135.7 723.2V730.2M136.4 719.8V729.7M137.1 718.6V734.3M137.9 720.5V730.2M138.6 722.4V736.9M139.3 723.4V732.2M140.1 717.0V731.8M140.8 723.0V732.3M141.5 723.7V733.1M142.3 720.9V731.1M143.0 726.5V726.5M143.0 726.5V726.5M143.8 722.9V727.8M144.5 722.0V728.3M145.2 722.0V732.0M146.0 720.1V730.7M146.8 724.4V728.7M147.5 723.5V732.9M148.2 724.0V729.8M149.0 720.7V731.9M149.8 721.0V732.2M150.5 722.5V728.2M151.2 724.2V729.8M152.0 726.5V726.5M153.0 726.5V726.5M153.8 723.2V727.9M154.6 724.7V729.0M155.4 724.9V730.1M156.2 725.2V729.6M157.0 726.5V726.5M158.0 726.5V726.5M158.7 721.5V729.8M159.4 722.7V729.1M160.1 721.1V732.8M160.9 722.6V730.7M161.6 716.5V735.5M162.3 723.2V729.8M163.0 716.7V732.6M163.7 723.3V731.9M164.4 717.7V735.6M165.1 722.4V729.9M165.9 717.8V733.4M166.6 720.1V731.0M167.3 724.5V731.7M168.0 726.5V726.5M172.0 726.5V726.5M172.7 722.9V729.3M173.4 723.3V730.4M174.1 720.9V733.7M174.9 723.0V730.1M175.6 719.7V730.6M176.3 721.6V730.4M177.0 717.7V730.3M177.7 719.7V730.1M178.4 719.5V731.9M179.1 719.2V730.0M179.9 718.8V731.2M180.6 721.5V733.2M181.3 721.0V728.5M182.0 726.5V726.5M185.0 726.5V726.5M185.7 721.0V728.7M186.4 722.2V730.8M187.1 722.4V731.0M187.9 723.3V735.6M188.6 719.2V731.1M189.3 720.0V729.2M190.0 726.5V726.5M195.0 726.5V726.5M195.8 721.9V731.9M196.5 721.5V729.6M197.2 722.7V730.1M198.0 720.3V735.0M198.8 717.5V735.4M199.5 721.0V735.3M200.2 718.6V734.0M201.0 722.3V730.6M201.8 723.3V733.1M202.5 721.9V729.9M203.2 721.2V732.3M204.0 726.5V726.5M207.0 726.5V726.5M207.7 723.1V729.3M208.4 723.3V729.0M209.2 724.3V728.9M209.9 722.5V729.4M210.6 723.8V732.1M211.3 719.5V728.9M212.0 720.3V732.8M212.8 724.1V729.9M213.5 721.4V733.8M214.2 723.1V732.9M214.9 723.8V731.8M215.6 723.3V730.5M216.4 721.2V732.2M217.1 720.7V729.5M217.8 721.6V729.0M218.5 721.1V729.1M219.2 723.2V729.9M220.0 723.1V731.2M220.7 719.4V730.0M221.4 724.5V732.6M222.1 720.9V730.0M222.8 722.5V731.7M223.6 723.6V728.3M224.3 725.2V728.8M225.0 726.5V726.5M233.0 726.5V726.5M233.8 720.8V736.7M234.6 715.3V731.3M235.4 721.2V733.3M236.2 717.0V730.7M237.0 726.5V726.5M239.0 726.5V726.5M239.7 724.6V731.8M240.5 721.1V730.0M241.2 720.2V731.4M241.9 720.9V730.5M242.7 718.2V732.2M243.4 722.8V732.2M244.1 723.1V733.9M244.9 720.1V729.9M245.6 721.2V736.6M246.3 718.6V735.1M247.1 717.1V735.5M247.8 723.6V730.8M248.5 723.6V733.7M249.3 722.8V732.3M250.0 726.5V726.5M253.0 726.5V726.5M253.8 719.7V734.2M254.6 717.9V738.4M255.4 719.8V737.4M256.2 721.1V735.4M257.0 726.5V726.5M265.0 726.5V726.5M265.7 723.4V732.3M266.5 722.7V730.9M267.2 722.8V730.2M267.9 721.3V735.0M268.6 721.3V735.6M269.4 721.8V739.2M270.1 717.5V738.1M270.8 720.2V731.7M271.5 721.3V734.1M272.3 722.9V734.4M273.0 726.5V726.5M273.0 726.5V726.5M273.7 725.2V727.9M274.4 723.9V729.6M275.1 724.6V728.8M275.8 722.0V730.7M276.5 723.2V731.1M277.2 724.0V728.6M277.9 721.4V731.3M278.6 721.5V729.3M279.3 722.9V732.0M280.0 723.6V731.2M280.7 723.8V732.5M281.4 721.3V732.8M282.1 723.5V732.3M282.8 722.2V731.1M283.5 720.6V729.9M284.2 722.4V731.4M284.9 724.2V728.5M285.6 725.0V730.6M286.3 723.2V728.2M287.0 726.5V726.5M287.0 726.5V726.5M287.8 722.7V733.0M288.5 717.9V729.6M289.2 716.8V736.5M290.0 723.2V735.8M290.8 719.3V735.4M291.5 722.3V729.7M292.2 723.0V730.6M293.0 726.5V726.5M295.0 726.5V726.5M295.7 723.9V728.0M296.4 724.0V728.1M297.1 725.0V730.3M297.9 722.6V731.4M298.6 722.2V728.5M299.3 723.9V731.1M300.0 724.4V730.5M300.7 724.7V730.2M301.4 722.3V730.1M302.1 722.0V728.1M302.9 725.1V728.3M303.6 724.5V730.1M304.3 724.0V729.0M305.0 726.5V726.5M305.0 726.5V726.5M305.8 721.5V734.5M306.5 719.9V732.7M307.2 721.3V731.7M308.0 726.5V726.5M317.0 726.5V726.5M317.8 720.2V732.4M318.5 723.3V730.2M319.2 717.9V734.2M320.0 719.1V732.5M320.8 718.4V736.1M321.5 721.5V730.4M322.2 719.6V732.7M323.0 726.5V726.5M327.0 726.5V726.5M327.7 723.9V730.6M328.5 719.1V733.2M329.2 718.9V732.3M329.9 715.1V731.1M330.7 716.2V733.0M331.4 713.5V730.6M332.1 721.6V737.4M332.9 718.4V731.0M333.6 718.3V736.5M334.3 717.6V737.4M335.1 720.2V738.1M335.8 717.6V730.4M336.5 721.7V729.6M337.3 722.4V730.6M338.0 726.5V726.5M340.0 726.5V726.5M340.7 724.2V728.3M341.4 722.6V729.7M342.1 723.9V732.8M342.8 720.6V730.5M343.5 720.1V730.1M344.2 723.2V730.4M344.9 724.1V732.6M345.6 721.9V730.8M346.4 720.8V730.4M347.1 719.5V729.0M347.8 719.4V732.8M348.5 724.2V728.8M349.2 721.5V729.4M349.9 721.3V729.6M350.6 724.4V731.6M351.3 722.9V729.7M352.0 726.5V726.5M353.0 726.5V726.5M353.7 723.7V728.4M354.4 724.7V729.6M355.1 722.7V732.0M355.8 722.3V731.2M356.5 723.2V730.0M357.2 724.3V731.1M357.9 724.6V730.7M358.6 721.2V729.1M359.3 723.9V729.1M360.0 726.5V726.5M369.0 726.5V726.5M369.7 724.6V727.4M370.4 724.0V727.8M371.1 724.7V728.5M371.8 723.8V729.6M372.5 723.9V729.3M373.2 725.2V729.8M373.9 723.7V727.9M374.6 722.1V729.6M375.4 722.5V731.0M376.1 723.1V729.9M376.8 723.1V730.2M377.5 722.4V728.2M378.2 721.6V730.2M378.9 723.1V728.7M379.6 723.6V730.2M380.3 724.8V729.9M381.0 723.0V731.5M381.7 723.0V731.6M382.4 723.5V729.3M383.1 724.6V728.1M383.8 721.4V728.2M384.5 724.7V728.1M385.2 724.4V730.4M385.9 722.8V730.8M386.6 724.9V729.8M387.4 723.9V730.9M388.1 725.1V727.9M388.8 722.9V727.9M389.5 722.9V728.8M390.2 724.5V729.2M390.9 724.1V728.8M391.6 723.7V728.9M392.3 725.5V727.2M393.0 726.5V726.5M393.0 726.5V726.5M393.7 722.1V733.0M394.4 716.3V735.8M395.1 719.9V734.6M395.8 714.6V730.6M396.5 715.2V738.4M397.2 720.8V738.0M397.9 717.4V738.1M398.6 717.3V730.8M399.3 718.1V730.1M400.0 726.5V726.5M400.0 726.5V726.5M400.7 725.3V728.4M401.4 723.2V728.7M402.2 723.7V728.1M402.9 724.2V729.4M403.6 725.0V731.4M404.3 722.3V728.4M405.1 724.0V729.7M405.8 721.8V729.6M406.5 724.2V730.9M407.2 722.0V731.7M407.9 724.5V728.2M408.7 723.7V731.4M409.4 724.9V729.7M410.1 724.6V729.4M410.8 722.4V729.5M411.6 722.9V730.2M412.3 725.1V729.2M413.0 726.5V726.5M413.0 726.5V726.5M413.7 725.0V728.2M414.4 720.9V730.7M415.1 724.2V729.6M415.8 723.8V729.5M416.5 720.5V729.5M417.2 718.6V733.9M418.0 723.4V731.3M418.7 720.4V731.4M419.4 720.2V729.8M420.1 720.7V729.8M420.8 722.5V731.4M421.5 722.1V730.0M422.2 722.2V735.1M422.9 718.0V733.2M423.6 722.6V730.1M424.3 718.1V729.5M425.0 719.9V730.4M425.8 724.0V733.4M426.5 719.7V731.3M427.2 723.6V731.2M427.9 721.4V729.1M428.6 723.1V729.0M429.3 722.6V729.5M430.0 726.5V726.5M433.0 726.5V726.5M433.7 725.5V729.5M434.4 722.8V728.3M435.1 724.7V728.9M435.9 724.9V729.7M436.6 722.2V731.3M437.3 723.7V731.0M438.0 720.9V732.6M438.7 722.6V730.5M439.4 724.4V733.2M440.1 723.6V732.4M440.9 723.7V728.7M441.6 721.7V731.0M442.3 724.0V733.2M443.0 724.1V729.2M443.7 721.9V729.9M444.4 721.3V733.4M445.1 723.6V733.2M445.9 722.4V730.7M446.6 721.6V730.6M447.3 720.0V730.3M448.0 718.5V733.2M448.7 719.7V733.5M449.4 718.9V729.8M450.1 721.6V729.1M450.9 723.7V734.3M451.6 719.0V731.9M452.3 719.5V733.5M453.0 720.9V729.8M453.7 719.4V731.6M454.4 719.4V729.8M455.1 721.7V733.5M455.9 723.5V730.5M456.6 724.0V728.9M457.3 723.6V729.2M458.0 722.3V730.5M458.7 724.2V731.0M459.4 723.0V730.3M460.1 724.1V728.7M460.9 723.4V727.9M461.6 723.9V728.9M462.3 723.9V727.7M463.0 726.5V726.5M463.0 726.5V726.5M463.7 725.9V727.2M464.4 724.7V728.2M465.1 724.7V728.3M465.8 725.1V728.6M466.5 724.0V727.5M467.2 725.6V728.8M467.9 724.7V729.4M468.6 724.9V729.0M469.3 724.4V728.1M470.0 724.7V729.0M470.7 724.8V728.0M471.4 723.6V728.5M472.1 725.3V728.7M472.9 725.4V729.6M473.6 723.3V727.8M474.3 725.5V728.6M475.0 723.5V729.1M475.7 723.3V728.4M476.4 724.2V728.1M477.1 723.6V728.7M477.8 725.5V727.9M478.5 724.1V729.1M479.2 725.1V728.2M479.9 725.4V727.9M480.6 725.8V727.4M481.3 725.2V727.4M482.0 726.5V726.5M482.0 726.5V726.5M482.8 721.4V731.6M483.6 716.0V734.2M484.4 715.5V731.5M485.2 716.6V730.5M486.0 726.5V726.5M486.0 726.5V726.5M486.7 723.5V731.4M487.4 723.3V728.7M488.1 724.1V729.2M488.8 719.9V731.8M489.5 723.8V729.1M490.2 722.4V733.3M490.9 723.4V735.1M491.6 721.8V731.8M492.3 720.0V736.2M493.0 723.3V736.1M493.7 721.7V736.0M494.4 721.7V733.5M495.1 720.3V736.7M495.8 722.2V731.4M496.5 720.3V735.3M497.2 722.4V737.0M497.9 720.0V731.9M498.6 717.5V731.6M499.3 722.2V729.7M500.0 721.6V730.2M500.7 723.2V730.8M501.4 723.1V731.8M502.1 718.7V729.9M502.8 717.9V730.0M503.5 721.5V729.9M504.2 723.7V732.4M504.9 723.0V729.5M505.6 724.0V732.0M506.3 724.4V730.4M507.0 726.5V726.5M512.0 726.5V726.5M512.8 723.1V729.1M513.5 724.0V731.9M514.2 720.2V733.6M515.0 723.7V730.0M515.8 722.7V730.6M516.5 721.2V729.5M517.2 723.7V730.5M518.0 726.5V726.5M524.0 726.5V726.5M524.7 723.0V728.4M525.4 722.4V731.4M526.1 723.0V728.7M526.8 719.9V730.1M527.5 723.8V730.1M528.2 718.0V733.7M528.9 719.0V734.7M529.6 721.2V735.9M530.3 718.6V735.2M531.0 720.7V729.8M531.7 720.8V732.8M532.4 722.8V735.0M533.1 721.9V733.2M533.9 719.1V733.2M534.6 720.9V730.7M535.3 718.9V730.8M536.0 716.6V731.5M536.7 720.0V731.3M537.4 720.3V734.4M538.1 721.1V734.2M538.8 723.3V730.6M539.5 722.7V729.9M540.2 722.0V729.3M540.9 723.8V728.9M541.6 724.4V731.4M542.3 723.3V728.2M543.0 726.5V726.5M543.0 726.5V726.5M543.7 724.5V729.3M544.4 724.9V728.0M545.1 722.8V728.4M545.8 722.1V728.2M546.5 722.2V730.4M547.2 724.0V729.1M547.9 723.7V731.3M548.6 722.5V731.4M549.4 720.9V732.3M550.1 722.9V728.8M550.8 721.8V728.8M551.5 724.5V730.0M552.2 720.8V732.2M552.9 723.0V729.4M553.6 722.5V730.0M554.3 720.8V732.7M555.0 722.2V729.7M555.7 722.8V733.1M556.4 720.6V733.1M557.1 722.0V732.0M557.8 723.6V730.7M558.5 722.8V731.0M559.2 724.5V728.9M559.9 723.1V728.5M560.6 723.5V730.4M561.4 723.5V728.5M562.1 724.6V731.5M562.8 724.3V729.6M563.5 724.5V729.8M564.2 725.0V728.9M564.9 723.8V729.7M565.6 725.2V730.2M566.3 725.5V729.0M567.0 726.5V726.5M567.0 726.5V726.5M567.7 725.8V727.6M568.4 724.8V727.7M569.1 724.5V727.3M569.8 725.3V728.5M570.5 724.3V727.4M571.2 724.4V727.4M571.9 725.5V728.3M572.6 725.5V729.3M573.3 725.2V727.7M574.0 725.4V727.5M574.7 724.5V727.9M575.4 724.8V727.7M576.1 724.4V729.0M576.8 723.3V727.5M577.5 723.5V729.3M578.2 724.1V728.2M578.9 725.3V729.4M579.6 725.4V728.0M580.3 725.5V727.7M581.0 724.9V728.0M581.7 725.5V728.2M582.4 725.5V727.6M583.1 725.2V727.8M583.8 725.3V728.3M584.5 724.0V729.1M585.2 724.3V728.5M585.9 725.0V727.6M586.6 724.7V727.9M587.3 725.6V727.6M588.0 726.5V726.5M603.0 726.5V726.5M603.7 723.3V736.0M604.4 719.2V735.1M605.1 719.8V733.3M605.8 716.6V741.5M606.5 721.2V732.6M607.2 710.8V734.2M607.9 718.5V739.8M608.6 720.7V732.1M609.3 718.5V730.8M610.0 726.5V726.5M610.0 726.5V726.5M610.7 722.8V728.5M611.4 721.8V730.2M612.1 724.1V729.3M612.9 721.9V729.9M613.6 723.2V728.7M614.3 723.0V730.8M615.0 723.3V730.8M615.7 718.7V729.0M616.4 720.4V730.2M617.1 720.1V729.2M617.9 722.2V731.5M618.6 721.5V732.2M619.3 722.8V732.6M620.0 720.3V730.0M620.7 719.2V730.6M621.4 724.0V728.6M622.1 721.8V731.8M622.9 721.7V728.5M623.6 723.4V729.8M624.3 725.0V728.1M625.0 726.5V726.5M632.0 726.5V726.5M632.8 721.9V734.4M633.5 721.0V737.4M634.2 717.4V733.2M635.0 722.2V735.0M635.8 717.5V731.8M636.5 721.7V731.1M637.2 719.8V730.8M638.0 726.5V726.5M639.0 726.5V726.5M639.8 721.5V731.9M640.5 713.6V731.7M641.2 716.1V735.2M642.0 712.0V732.8M642.8 718.8V739.2M643.5 721.1V739.1M644.2 721.4V730.0M645.0 726.5V726.5M645.0 726.5V726.5M645.7 725.0V728.7M646.4 722.1V731.8M647.1 724.4V729.2M647.8 721.1V728.8M648.5 723.3V730.7M649.2 722.7V734.0M650.0 721.9V729.8M650.7 723.3V733.4M651.4 723.4V730.9M652.1 717.8V731.0M652.8 719.3V730.5M653.5 723.6V732.1M654.2 723.7V733.4M654.9 720.7V732.3M655.6 717.5V734.7M656.3 721.9V730.6M657.0 722.1V731.0M657.8 720.9V734.3M658.5 723.2V729.6M659.2 719.7V728.8M659.9 723.4V731.2M660.6 723.8V732.2M661.3 723.8V729.5M662.0 726.5V726.5M663.0 726.5V726.5M663.7 716.3V733.0M664.4 715.8V733.4M665.1 718.5V743.7M665.9 712.3V737.8M666.6 719.6V732.7M667.3 718.0V735.0M668.0 726.5V726.5M668.0 726.5V726.5M668.8 721.3V728.3M669.5 723.9V729.2M670.2 719.6V731.5M671.0 723.5V731.1M671.8 719.6V731.6M672.5 718.7V734.0M673.2 720.9V730.3M674.0 723.8V730.0M674.8 723.8V729.6M675.5 723.3V729.9M676.2 722.4V731.6M677.0 726.5V726.5M678.0 726.5V726.5M678.8 718.4V735.0M679.6 707.9V734.1M680.4 711.6V736.3M681.2 718.7V731.9M682.0 726.5V726.5M688.0 726.5V726.5M688.7 723.4V731.3M689.4 722.7V730.6M690.1 719.7V732.2M690.9 722.0V729.2M691.6 720.8V733.8M692.3 723.3V730.2M693.0 723.4V733.9M693.7 723.5V733.3M694.4 721.3V729.4M695.1 721.9V732.1M695.9 719.8V733.6M696.6 724.4V733.5M697.3 724.2V731.4M698.0 726.5V726.5M700.0 726.5V726.5M700.7 721.6V730.4M701.4 720.7V733.0M702.1 715.9V733.7M702.9 720.1V734.3M703.6 720.8V736.2M704.3 717.7V733.9M705.0 719.2V738.5M705.7 722.3V738.2M706.4 714.4V734.7M707.1 719.3V735.4M707.9 721.4V731.0M708.6 722.9V735.8M709.3 720.0V734.1M710.0 726.5V726.5M710.0 726.5V726.5M710.7 724.3V729.5M711.4 721.3V728.7M712.1 719.8V730.0M712.9 723.5V731.1M713.6 722.3V732.1M714.3 719.0V734.5M715.0 721.6V730.1M715.7 719.0V729.2M716.4 719.6V731.6M717.1 724.0V729.1M717.9 723.7V732.9M718.6 723.6V732.2M719.3 725.0V728.7M720.0 726.5V726.5M722.0 726.5V726.5M722.7 720.4V731.7M723.5 718.3V730.6M724.2 720.0V733.2M724.9 721.1V731.9M725.7 719.3V739.7M726.4 717.4V732.2M727.1 717.1V736.4M727.9 716.6V736.0M728.6 720.3V732.0M729.3 712.6V731.2M730.1 718.1V738.4M730.8 716.7V731.9M731.5 722.2V731.5M732.3 722.4V734.9M733.0 726.5V726.5M733.0 726.5V726.5M733.7 723.2V727.5M734.4 723.4V730.0M735.1 722.0V728.0M735.8 723.7V729.2M736.5 722.4V728.5M737.2 724.1V729.3M738.0 720.3V731.6M738.7 722.8V731.7M739.4 721.4V731.0M740.1 721.1V728.7M740.8 723.3V729.0M741.5 721.7V731.8M742.2 720.3V731.7M742.9 721.0V730.9M743.6 720.7V729.4M744.3 722.6V732.6M745.0 723.9V731.8M745.8 724.1V730.0M746.5 722.4V730.7M747.2 722.7V731.5M747.9 724.0V728.1M748.6 722.9V728.5M749.3 723.7V729.2M750.0 726.5V726.5M750.0 726.5V726.5M750.7 725.3V727.4M751.4 724.0V729.4M752.1 723.1V728.0M752.9 724.7V730.5M753.6 722.2V728.9M754.3 721.7V729.4M755.0 724.5V730.9M755.7 724.5V731.5M756.4 722.0V728.7M757.1 721.8V729.7M757.9 722.7V728.3M758.6 723.6V731.6M759.3 723.9V729.7M760.0 721.8V729.5M760.7 722.3V730.1M761.4 723.9V730.2M762.1 723.1V730.0M762.9 722.6V730.1M763.6 725.4V728.3M764.3 724.6V727.7M765.0 726.5V726.5M767.0 726.5V726.5M767.7 721.8V729.3M768.4 719.9V730.3M769.1 723.2V733.6M769.9 722.1V731.5M770.6 716.4V730.4M771.3 721.6V732.3M772.0 721.1V736.9M772.7 720.6V735.7M773.4 718.1V731.2M774.1 720.3V733.6M774.9 722.6V731.0M775.6 721.6V730.0M776.3 723.8V731.6M777.0 726.5V726.5M777.0 726.5V726.5M777.7 725.1V728.7M778.5 723.3V728.7M779.2 723.6V728.4M779.9 723.5V728.4M780.6 725.0V730.1M781.4 724.1V729.4M782.1 725.1V728.3M782.8 723.3V729.1M783.5 724.8V728.6M784.3 724.3V727.4M785.0 726.5V726.5M792.0 726.5V726.5M792.7 720.4V734.2M793.5 719.2V731.2M794.2 721.2V731.3M794.9 713.7V737.3M795.6 715.0V732.7M796.4 720.7V730.8M797.1 722.4V737.6M797.8 720.7V732.2M798.5 722.2V735.4M799.3 721.2V729.2M800.0 726.5V726.5M800.0 726.5V726.5M800.7 724.3V731.2M801.4 720.9V733.0M802.1 722.2V729.1M802.8 720.7V732.4M803.5 722.7V729.6M804.2 720.4V731.2M804.9 723.6V729.7M805.6 721.5V733.1M806.3 721.4V731.5M807.0 726.5V726.5M809.0 726.5V726.5M809.8 716.7V740.7M810.5 718.7V741.2M811.2 718.6V731.3M812.0 726.5V726.5M817.0 726.5V726.5M817.7 725.0V728.0M818.4 723.2V728.7M819.2 721.7V732.5M819.9 722.8V731.8M820.6 723.9V728.7M821.3 724.2V733.0M822.1 722.1V729.0M822.8 721.6V729.1M823.5 721.9V732.1M824.2 722.5V729.2M824.9 723.7V729.6M825.7 721.5V731.8M826.4 722.5V728.9M827.1 724.3V730.4M827.8 723.9V730.9M828.6 723.4V728.5M829.3 723.6V727.9M830.0 726.5V726.5M830.0 726.5V726.5M830.7 724.7V727.2M831.4 725.4V728.5M832.2 724.3V729.4M832.9 723.8V727.7M833.6 723.7V727.9M834.3 725.1V728.8M835.1 722.8V727.7M835.8 724.0V729.9M836.5 723.8V729.2M837.2 725.2V727.8M837.9 724.8V728.5M838.7 723.2V729.7M839.4 725.2V729.1M840.1 723.1V728.6M840.8 723.7V729.2M841.6 724.3V727.5M842.3 724.3V728.2M843.0 726.5V726.5M844.0 726.5V726.5M844.8 721.1V733.6M845.5 718.6V735.3M846.2 718.6V729.7M847.0 717.1V732.3M847.8 722.6V736.5M848.5 722.2V731.1M849.2 718.9V731.9M850.0 726.5V726.5M857.0 726.5V726.5M857.7 724.6V730.8M858.5 723.7V731.3M859.2 720.2V732.2M859.9 723.9V732.9M860.6 721.5V734.4M861.4 721.2V734.6M862.1 717.9V729.4M862.8 723.7V730.4M863.5 717.3V730.0M864.3 719.2V733.9M865.0 719.6V730.2M865.7 720.3V733.1M866.5 719.6V730.7M867.2 722.1V729.7M867.9 720.0V730.3M868.6 723.3V729.4M869.4 722.1V732.7M870.1 720.0V728.8M870.8 723.7V732.6M871.5 722.2V729.1M872.3 724.8V729.9M873.0 726.5V726.5M873.0 726.5V726.5M873.7 724.8V727.9M874.4 721.3V729.1M875.1 724.3V731.5M875.8 724.2V729.3M876.5 723.4V730.1M877.2 723.5V729.4M877.9 721.1V730.9M878.6 724.0V732.2M879.3 723.2V729.0M880.0 720.4V729.2M880.7 723.2V730.9M881.4 722.0V734.0M882.1 724.0V729.6M882.8 721.7V733.2M883.5 720.2V728.9M884.2 722.4V729.3M884.9 724.5V729.1M885.6 723.5V730.6M886.3 724.9V729.5M887.0 726.5V726.5M888.0 726.5V726.5M888.8 721.4V729.9M889.5 719.5V733.9M890.2 717.2V736.9M891.0 721.3V735.0M891.8 722.1V731.8M892.5 721.3V737.0M893.2 713.9V733.4M894.0 722.6V738.7M894.8 715.1V733.4M895.5 719.3V730.7M896.2 723.2V734.9M897.0 726.5V726.5M903.0 726.5V726.5M904.0 724.9V730.1M905.0 726.5V726.5M917.0 726.5V726.5M917.8 721.3V733.8M918.5 726.5V726.5M932.0 726.5V726.5M932.8 722.7V737.5M933.5 720.6V739.6M934.2 720.2V733.7M935.0 726.5V726.5M935.0 726.5V726.5M935.7 723.2V730.7M936.4 720.5V728.9M937.1 724.0V731.4M937.9 722.5V731.3M938.6 723.0V730.9M939.3 725.0V729.4M940.0 726.5V726.5M943.0 726.5V726.5M943.7 725.1V728.4M944.4 722.4V728.3M945.1 724.1V730.1M945.8 724.7V728.6M946.5 724.6V729.3M947.2 721.5V729.9M947.9 724.6V729.4M948.6 724.3V730.8M949.3 723.4V729.0M950.0 726.5V726.5M952.0 726.5V726.5M952.8 709.0V744.4M953.6 717.3V733.7M954.4 708.3V736.7M955.2 711.6V732.6M956.0 726.5V726.5M956.0 726.5V726.5M956.8 722.4V731.2M957.6 722.0V729.9M958.4 719.3V734.3M959.2 722.3V731.7M960.0 726.5V726.5M960.0 726.5V726.5M960.7 720.5V738.3M961.4 708.3V735.5M962.1 718.0V735.7M962.9 718.3V743.0M963.6 712.9V743.5M964.3 718.5V739.0M965.0 726.5V726.5M975.0 726.5V726.5M975.8 719.3V735.7M976.5 721.6V731.4M977.2 723.5V732.9M978.0 726.5V726.5M983.0 726.5V726.5M983.7 722.3V733.0M984.5 717.8V730.2M985.2 721.4V735.2M985.9 716.7V736.9M986.6 713.8V735.6M987.4 720.7V730.7M988.1 714.5V731.1M988.8 718.2V732.0M989.5 720.6V730.1M990.3 723.8V730.3M991.0 726.5V726.5M998.0 726.5V726.5M998.7 719.9V731.4M999.4 719.2V739.9M1000.1 709.4V737.1M1000.9 714.1V734.7M1001.6 713.4V739.8M1002.3 721.7V738.3M1003.0 726.5V726.5M1003.0 726.5V726.5M1003.7 722.5V730.7M1004.4 724.7V731.3M1005.1 720.3V733.1M1005.9 723.3V730.1M1006.6 723.8V729.6M1007.3 722.3V732.0M1008.0 720.1V729.8M1008.7 719.9V734.5M1009.4 720.4V733.0M1010.1 720.1V729.1M1010.9 723.3V732.3M1011.6 721.1V728.6M1012.3 722.8V730.0M1013.0 726.5V726.5M1015.0 726.5V726.5M1015.7 723.6V729.7M1016.4 725.0V728.6M1017.1 724.9V728.1M1017.8 724.5V729.5M1018.5 724.1V730.2M1019.2 723.5V731.3M1019.9 724.2V731.0M1020.6 725.0V729.4M1021.3 724.4V728.5M1022.0 726.5V726.5M1025.0 726.5V726.5M1025.7 722.4V729.4M1026.4 721.0V729.7M1027.1 723.5V733.2M1027.8 722.2V730.5M1028.5 718.9V729.6M1029.2 723.5V731.4M1029.9 721.1V729.2M1030.6 719.8V730.7M1031.3 724.5V731.4M1032.0 726.5V726.5M1033.0 726.5V726.5M1033.7 720.0V733.4M1034.4 718.1V732.1M1035.1 721.2V733.1M1035.8 720.2V732.5M1036.5 718.4V734.9M1037.2 722.5V733.5M1037.9 722.6V733.0M1038.6 719.5V733.2M1039.3 723.4V732.6M1040.0 726.5V726.5M1043.0 726.5V726.5M1043.7 721.1V729.0M1044.4 723.7V729.1M1045.1 723.1V729.2M1045.8 722.9V731.2M1046.5 718.6V731.2M1047.2 722.0V729.6M1047.9 723.8V729.3M1048.6 723.0V729.7M1049.3 723.8V728.4M1050.0 726.5V726.5M1057.0 726.5V726.5M1057.7 719.1V730.6M1058.4 719.3V734.3M1059.1 722.4V732.1M1059.9 716.4V734.6M1060.6 720.4V738.9M1061.3 719.6V731.5M1062.0 722.4V732.7M1062.7 718.7V733.0M1063.4 720.3V734.4M1064.1 717.9V733.5M1064.9 717.2V731.3M1065.6 717.2V732.7M1066.3 723.6V732.3M1067.0 726.5V726.5M1073.0 726.5V726.5M1073.8 720.1V730.7M1074.5 723.7V734.4M1075.2 718.1V731.3M1076.0 719.7V736.6M1076.8 723.2V734.5M1077.5 722.8V730.4M1078.2 716.1V731.7M1079.0 721.0V731.7M1079.8 717.0V733.6M1080.5 722.4V733.0M1081.2 724.4V730.1M1082.0 726.5V726.5M1082.0 726.5V726.5M1082.7 720.1V730.9M1083.5 720.1V729.1M1084.2 718.6V732.3M1084.9 719.0V733.2M1085.6 720.9V736.9M1086.4 716.4V733.7M1087.1 717.0V735.0M1087.8 718.3V736.2M1088.5 722.5V733.4M1089.3 720.4V730.5M1090.0 726.5V726.5M1097.0 726.5V726.5M1097.8 720.3V729.1M1098.5 721.3V733.8M1099.2 723.0V732.6M1100.0 722.2V734.1M1100.8 716.5V737.0M1101.5 719.0V731.8M1102.2 722.5V733.9M1103.0 726.5V726.5M1107.0 726.5V726.5M1107.7 723.4V732.6M1108.4 723.1V732.8M1109.2 722.6V733.6M1109.9 716.0V737.1M1110.6 721.3V738.8M1111.3 719.3V732.1M1112.1 717.5V739.4M1112.8 711.7V737.3M1113.5 713.6V737.6M1114.2 712.5V735.3M1114.9 715.0V738.8M1115.7 711.6V740.8M1116.4 718.9V731.9M1117.1 720.6V733.3M1117.8 716.4V734.8M1118.6 715.8V737.4M1119.3 722.1V731.9M1120.0 726.5V726.5M1120.0 726.5V726.5M1120.7 724.7V730.0M1121.4 723.6V730.6M1122.2 723.9V730.0M1122.9 720.9V728.3M1123.6 722.9V728.6M1124.3 721.9V731.2M1125.1 719.9V731.3M1125.8 724.5V728.6M1126.5 722.2V728.5M1127.2 720.8V728.5M1127.9 724.3V732.7M1128.7 723.5V732.7M1129.4 721.3V732.5M1130.1 724.4V729.3M1130.8 721.4V731.8M1131.6 723.4V729.8M1132.3 724.7V729.8M1133.0 726.5V726.5M1138.0 726.5V726.5M1138.7 722.1V730.1M1139.4 723.8V729.3M1140.1 722.4V735.0M1140.9 720.9V731.7M1141.6 721.8V734.9M1142.3 719.7V733.8M1143.0 718.0V731.3M1143.7 722.2V735.7M1144.4 713.9V732.0M1145.1 714.1V736.6M1145.9 721.8V738.2M1146.6 721.6V735.6M1147.3 722.1V736.7M1148.0 718.9V731.2M1148.7 719.9V735.3M1149.4 721.8V732.5M1150.1 715.5V731.7M1150.9 721.3V733.9M1151.6 721.1V735.2M1152.3 724.2V730.6M1153.0 726.5V726.5M1157.0 726.5V726.5M1157.7 722.5V729.2M1158.4 722.1V731.0M1159.1 719.8V728.6M1159.9 720.4V729.0M1160.6 720.6V730.2M1161.3 722.6V732.5M1162.0 724.1V729.2M1162.7 719.4V732.0M1163.4 723.8V730.4M1164.1 724.3V728.8M1164.9 723.4V732.8M1165.6 721.2V730.4M1166.3 723.2V731.1M1167.0 726.5V726.5M1167.0 726.5V726.5M1167.8 715.6V733.2M1168.5 716.6V739.9M1169.2 713.1V738.9M1170.0 726.5V726.5M1172.0 726.5V726.5M1172.7 723.9V728.3M1173.4 724.9V728.7M1174.1 722.9V730.0M1174.9 723.0V730.1M1175.6 722.5V728.8M1176.3 721.0V729.9M1177.0 720.7V731.4M1177.7 721.4V731.3M1178.4 723.4V729.2M1179.1 721.6V732.4M1179.9 720.7V730.1M1180.6 724.0V728.9M1181.3 723.4V732.3M1182.0 722.9V729.1M1182.7 723.2V728.8M1183.4 722.9V729.9M1184.1 723.7V728.5M1184.9 723.3V731.6M1185.6 724.1V728.4M1186.3 722.4V729.2M1187.0 724.1V730.4M1187.7 723.9V728.3M1188.4 723.3V728.4M1189.1 724.0V731.1M1189.9 722.5V728.4M1190.6 724.5V727.7M1191.3 723.9V727.8M1192.0 726.5V726.5" stroke="#0000e6" stroke-width="1"/></svg>
<div class="a" style="left:0px;top:767px;width:1200px;height:25px;background:#fff;"></div>
<div class="a" style="left:10.5px;top:768px;width:1.0px;height:3.5px;background:#222;"></div>
<div class="a" style="left:28.5px;top:768px;width:1.0px;height:3.5px;background:#222;"></div>
<div class="a" style="left:47.5px;top:768px;width:1.0px;height:3.5px;background:#222;"></div>
<div class="a" style="left:66.5px;top:768px;width:1.0px;height:3.5px;background:#222;"></div>
<div class="a" style="left:85px;top:768px;width:2px;height:4.5px;background:#222;"></div>
<div class="a" style="left:103.5px;top:768px;width:1.0px;height:3.5px;background:#222;"></div>
<div class="a" style="left:122.5px;top:768px;width:1.0px;height:3.5px;background:#222;"></div>
<div class="a" style="left:141.5px;top:768px;width:1.0px;height:3.5px;background:#222;"></div>
<div class="a" style="left:159.5px;top:768px;width:1.0px;height:3.5px;background:#222;"></div>
<div class="a" style="left:178px;top:768px;width:2px;height:4.5px;background:#222;"></div>
<div class="a" style="left:197.5px;top:768px;width:1.0px;height:3.5px;background:#222;"></div>
<div class="a" style="left:216.5px;top:768px;width:1.0px;height:3.5px;background:#222;"></div>
<div class="a" style="left:234.5px;top:768px;width:1.0px;height:3.5px;background:#222;"></div>
<div class="a" style="left:253.5px;top:768px;width:1.0px;height:3.5px;background:#222;"></div>
<div class="a" style="left:272px;top:768px;width:2px;height:4.5px;background:#222;"></div>
<div class="a" style="left:291.5px;top:768px;width:1.0px;height:3.5px;background:#222;"></div>
<div class="a" style="left:309.5px;top:768px;width:1.0px;height:3.5px;background:#222;"></div>
<div class="a" style="left:328.5px;top:768px;width:1.0px;height:3.5px;background:#222;"></div>
<div class="a" style="left:347.5px;top:768px;width:1.0px;height:3.5px;background:#222;"></div>
<div class="a" style="left:365px;top:768px;width:2px;height:4.5px;background:#222;"></div>
<div class="a" style="left:384.5px;top:768px;width:1.0px;height:3.5px;background:#222;"></div>
<div class="a" style="left:403.5px;top:768px;width:1.0px;height:3.5px;background:#222;"></div>
<div class="a" style="left:422.5px;top:768px;width:1.0px;height:3.5px;background:#222;"></div>
<div class="a" style="left:440.5px;top:768px;width:1.0px;height:3.5px;background:#222;"></div>
<div class="a" style="left:459px;top:768px;width:2px;height:4.5px;background:#222;"></div>
<div class="a" style="left:478.5px;top:768px;width:1.0px;height:3.5px;background:#222;"></div>
<div class="a" style="left:497.5px;top:768px;width:1.0px;height:3.5px;background:#222;"></div>
<div class="a" style="left:515.5px;top:768px;width:1.0px;height:3.5px;background:#222;"></div>
<div class="a" style="left:534.5px;top:768px;width:1.0px;height:3.5px;background:#222;"></div>
<div class="a" style="left:553px;top:768px;width:2px;height:4.5px;background:#222;"></div>
<div class="a" style="left:571.5px;top:768px;width:1.0px;height:3.5px;background:#222;"></div>
<div class="a" style="left:590.5px;top:768px;width:1.0px;height:3.5px;background:#222;"></div>
<div class="a" style="left:609.5px;top:768px;width:1.0px;height:3.5px;background:#222;"></div>
<div class="a" style="left:628.5px;top:768px;width:1.0px;height:3.5px;background:#222;"></div>
<div class="a" style="left:646px;top:768px;width:2px;height:4.5px;background:#222;"></div>
<div class="a" style="left:665.5px;top:768px;width:1.0px;height:3.5px;background:#222;"></div>
<div class="a" style="left:684.5px;top:768px;width:1.0px;height:3.5px;background:#222;"></div>
<div class="a" style="left:703.5px;top:768px;width:1.0px;height:3.5px;background:#222;"></div>
<div class="a" style="left:721.5px;top:768px;width:1.0px;height:3.5px;background:#222;"></div>
<div class="a" style="left:740px;top:768px;width:2px;height:4.5px;background:#222;"></div>
<div class="a" style="left:759.5px;top:768px;width:1.0px;height:3.5px;background:#222;"></div>
<div class="a" style="left:778.5px;top:768px;width:1.0px;height:3.5px;background:#222;"></div>
<div class="a" style="left:796.5px;top:768px;width:1.0px;height:3.5px;background:#222;"></div>
<div class="a" style="left:815.5px;top:768px;width:1.0px;height:3.5px;background:#222;"></div>
<div class="a" style="left:834px;top:768px;width:2px;height:4.5px;background:#222;"></div>
<div class="a" style="left:852.5px;top:768px;width:1.0px;height:3.5px;background:#222;"></div>
<div class="a" style="left:871.5px;top:768px;width:1.0px;height:3.5px;background:#222;"></div>
<div class="a" style="left:890.5px;top:768px;width:1.0px;height:3.5px;background:#222;"></div>
<div class="a" style="left:909.5px;top:768px;width:1.0px;height:3.5px;background:#222;"></div>
<div class="a" style="left:927px;top:768px;width:2px;height:4.5px;background:#222;"></div>
<div class="a" style="left:946.5px;top:768px;width:1.0px;height:3.5px;background:#222;"></div>
<div class="a" style="left:965.5px;top:768px;width:1.0px;height:3.5px;background:#222;"></div>
<div class="a" style="left:984.5px;top:768px;width:1.0px;height:3.5px;background:#222;"></div>
<div class="a" style="left:1002.5px;top:768px;width:1.0px;height:3.5px;background:#222;"></div>
<div class="a" style="left:1021px;top:768px;width:2px;height:4.5px;background:#222;"></div>
<div class="a" style="left:1040.5px;top:768px;width:1.0px;height:3.5px;background:#222;"></div>
<div class="a" style="left:1058.5px;top:768px;width:1.0px;height:3.5px;background:#222;"></div>
<div class="a" style="left:1077.5px;top:768px;width:1.0px;height:3.5px;background:#222;"></div>
<div class="a" style="left:1096.5px;top:768px;width:1.0px;height:3.5px;background:#222;"></div>
<div class="a" style="left:1115px;top:768px;width:2px;height:4.5px;background:#222;"></div>
<div class="a" style="left:1133.5px;top:768px;width:1.0px;height:3.5px;background:#222;"></div>
<div class="a" style="left:1152.5px;top:768px;width:1.0px;height:3.5px;background:#222;"></div>
<div class="a" style="left:1171.5px;top:768px;width:1.0px;height:3.5px;background:#222;"></div>
<div class="a" style="left:1190.5px;top:768px;width:1.0px;height:3.5px;background:#222;"></div>
<div class="t" style="left:66.82px;top:774.20px;font-size:10px;line-height:14px;color:#333;font-weight:normal;transform:scale(0.9342,0.8000);--tw:36.38;--sy:0.8000;font-family:"Liberation Mono",monospace">15:38:10</div>
<div class="t" style="left:160.47px;top:774.20px;font-size:10px;line-height:14px;color:#333;font-weight:normal;transform:scale(0.9342,0.8000);--tw:36.38;--sy:0.8000;font-family:"Liberation Mono",monospace">15:38:15</div>
<div class="t" style="left:254.12px;top:774.20px;font-size:10px;line-height:14px;color:#333;font-weight:normal;transform:scale(0.9342,0.8000);--tw:36.38;--sy:0.8000;font-family:"Liberation Mono",monospace">15:38:20</div>
<div class="t" style="left:347.77px;top:774.20px;font-size:10px;line-height:14px;color:#333;font-weight:normal;transform:scale(0.9342,0.8000);--tw:36.38;--sy:0.8000;font-family:"Liberation Mono",monospace">15:38:25</div>
<div class="t" style="left:441.42px;top:774.20px;font-size:10px;line-height:14px;color:#333;font-weight:normal;transform:scale(0.9342,0.8000);--tw:36.38;--sy:0.8000;font-family:"Liberation Mono",monospace">15:38:30</div>
<div class="t" style="left:535.07px;top:774.20px;font-size:10px;line-height:14px;color:#333;font-weight:normal;transform:scale(0.9342,0.8000);--tw:36.38;--sy:0.8000;font-family:"Liberation Mono",monospace">15:38:35</div>
<div class="t" style="left:628.72px;top:774.20px;font-size:10px;line-height:14px;color:#333;font-weight:normal;transform:scale(0.9342,0.8000);--tw:36.38;--sy:0.8000;font-family:"Liberation Mono",monospace">15:38:40</div>
<div class="t" style="left:722.37px;top:774.20px;font-size:10px;line-height:14px;color:#333;font-weight:normal;transform:scale(0.9342,0.8000);--tw:36.38;--sy:0.8000;font-family:"Liberation Mono",monospace">15:38:45</div>
<div class="t" style="left:816.02px;top:774.20px;font-size:10px;line-height:14px;color:#333;font-weight:normal;transform:scale(0.9342,0.8000);--tw:36.38;--sy:0.8000;font-family:"Liberation Mono",monospace">15:38:50</div>
<div class="t" style="left:909.67px;top:774.20px;font-size:10px;line-height:14px;color:#333;font-weight:normal;transform:scale(0.9342,0.8000);--tw:36.38;--sy:0.8000;font-family:"Liberation Mono",monospace">15:38:55</div>
<div class="t" style="left:1003.32px;top:774.20px;font-size:10px;line-height:14px;color:#333;font-weight:normal;transform:scale(0.9342,0.8000);--tw:36.38;--sy:0.8000;font-family:"Liberation Mono",monospace">15:39:00</div>
<div class="t" style="left:1096.97px;top:774.20px;font-size:10px;line-height:14px;color:#333;font-weight:normal;transform:scale(0.9342,0.8000);--tw:36.38;--sy:0.8000;font-family:"Liberation Mono",monospace">15:39:05</div>
<div class="t" style="left:5.95px;top:774.20px;font-size:10px;line-height:14px;color:#333;font-weight:normal;transform:scale(0.7500,0.8000);--tw:4.17;--sy:0.8000;font-family:"Liberation Mono",monospace">5</div>
<div class="a" style="left:7.5px;top:783px;width:16px;height:9px;border:1px solid #999;border-bottom:none;background:#fff"></div>
<svg style="left:13px;top:785px" width="5" height="7" viewBox="0 0 5 7"><path d="M4.5 0V7L0 3.5Z" fill="#000"/></svg>
<div class="a" style="left:861px;top:783px;width:79px;height:9px;border:1px solid #aaa;border-bottom:none;background:#fff"></div>
<div class="a" style="left:1175.5px;top:783.5px;width:16px;height:9px;border:1px solid #999;border-bottom:none;background:#fff"></div>
<svg style="left:1181px;top:785px" width="5" height="7" viewBox="0 0 5 7"><path d="M0 0V7L4.5 3.5Z" fill="#000"/></svg>
<div class="a" style="left:0px;top:792px;width:1200px;height:42px;background:#f3f2f6;"></div>
<svg style="left:15px;top:802px" width="16" height="19" viewBox="0 0 16 19"><path d="M0 0L15.5 9.5L0 19Z" fill="#1a8fe3"/></svg>
<div class="a" style="left:48.6px;top:802px;width:18.999999999999993px;height:19px;background:#1a8fe3;"></div>
<svg style="left:85px;top:805px" width="21" height="13" viewBox="0 0 21 13"><path d="M10 0V13L0 6.5ZM20.5 0V13L10.5 6.5Z" fill="#1a8fe3"/></svg>
<svg style="left:123px;top:805px" width="21" height="13" viewBox="0 0 21 13"><path d="M0 0V13L10 6.5ZM10.5 0V13L20.5 6.5Z" fill="#1a8fe3"/></svg>
<svg style="left:162px;top:802px" width="17" height="18" viewBox="0 0 17 18"><path d="M4 6.5A6.8 6.8 0 1 0 8.5 4.2" fill="none" stroke="#1a8fe3" stroke-width="2"/><path d="M8.5 0.5V8L4.5 4.2Z" fill="#1a8fe3"/></svg>
<svg style="left:198px;top:802px" width="21" height="20" viewBox="0 0 21 20"><path d="M1 11V1H11" fill="none" stroke="#1a8fe3" stroke-width="2"/><path d="M4.5 14V4.5H14" fill="none" stroke="#1a8fe3" stroke-width="2"/><rect x="8" y="8" width="12.5" height="11.5" rx="1.5" fill="#1a8fe3"/><path d="M12 10.5V17L17 13.75Z" fill="#fff"/></svg>
<div class="a" style="left:231px;top:800px;width:1px;height:24px;background:#dcdbe0;"></div>
<svg style="left:243.5px;top:802px" width="19" height="19" viewBox="0 0 19 19"><circle cx="9.5" cy="9.5" r="8.3" fill="none" stroke="#111" stroke-width="2" stroke-dasharray="4.5 2.2"/><path d="M7 5.5V13.5L13.5 9.5Z" fill="#111"/></svg>
<div class="a" style="left:266.6px;top:802px;width:35px;height:19px;border:1px solid #222;background:#fff"></div>
<div class="t" style="left:270.00px;top:804.33px;font-size:12px;line-height:16px;color:#777;font-weight:normal;transform:scale(0.9655,0.8889);--tw:28.35;--sy:0.8889;">x1.00</div>
<div class="a" style="left:306px;top:810px;width:23px;height:2px;background:#1a8fe3;"></div>
<div class="a" style="left:329px;top:810px;width:33px;height:2px;background:#777;"></div>
<div class="a" style="left:323px;top:805.5px;width:11px;height:11px;border-radius:50%;background:#1a8fe3"></div>
<svg style="left:382px;top:804px" width="14" height="15" viewBox="0 0 14 15"><path d="M0 4.5H4L9 0V15L4 10.5H0Z" fill="#111"/><path d="M11 4.5Q13.5 7.5 11 10.5" stroke="#111" stroke-width="1.6" fill="none"/></svg>
<div class="a" style="left:405px;top:810px;width:51px;height:2px;background:#777;"></div>
<div class="a" style="left:400px;top:805.5px;width:11px;height:11px;border-radius:50%;background:#1a8fe3"></div>
<div class="a" style="left:470px;top:800px;width:1px;height:23px;background:#dcdbe0;"></div>
<div class="t" style="left:481.00px;top:804.33px;font-size:12px;line-height:16px;color:#333;font-weight:normal;transform:scale(0.9167,0.8333);--tw:44.00;--sy:0.8333;">波形表示</div>
<div class="a" style="left:544px;top:807.5px;width:27px;height:8.5px;background:#dcdce0;border-radius:4px"></div>
<div class="a" style="left:555px;top:802px;width:17px;height:17px;border-radius:50%;background:#1a8fe3;box-shadow:0 1px 2px rgba(0,0,0,.2)"></div>
<svg style="left:591px;top:803px" width="16" height="16" viewBox="0 0 16 16"><circle cx="8" cy="8" r="6.5" fill="none" stroke="#1a8fe3" stroke-width="2"/><circle cx="8" cy="8" r="3.5" fill="#1a8fe3"/></svg>
<div class="t" style="left:611.05px;top:804.18px;font-size:12px;line-height:16px;color:#333;font-weight:normal;transform:scale(0.9545,0.9091);--tw:22.91;--sy:0.9091;">通常</div>
<svg style="left:643.5px;top:803px" width="16" height="16" viewBox="0 0 16 16"><circle cx="8" cy="8" r="6.5" fill="none" stroke="#444" stroke-width="1.5"/></svg>
<div class="t" style="left:664.00px;top:803.00px;font-size:12px;line-height:16px;color:#333;font-weight:normal;transform:scale(0.9565,1.0000);--tw:22.96;--sy:1.0000;">全体</div>
<div class="a" style="left:698px;top:800px;width:1px;height:23px;background:#dcdbe0;"></div>
<script>(function(){var els=document.querySelectorAll(".t");for(var i=0;i<els.length;i++){var e=els[i];var cs=getComputedStyle(e);var tw=parseFloat(cs.getPropertyValue("--tw"));var sy=parseFloat(cs.getPropertyValue("--sy"));if(!(tw>0))continue;var old=e.style.transform;e.style.transform="none";var nw=e.getBoundingClientRect().width;if(nw>0){e.style.transform="scale("+(tw/nw).toFixed(4)+","+sy+")";}else{e.style.transform=old;}}})();</script>
</body></html>
